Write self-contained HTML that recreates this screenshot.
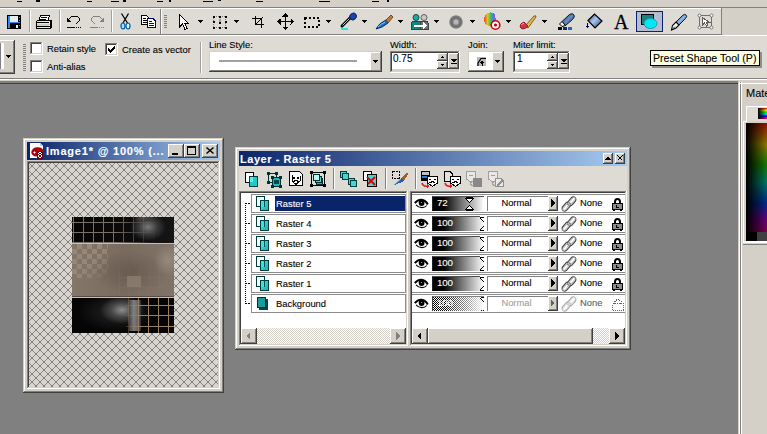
<!DOCTYPE html>
<html><head><meta charset="utf-8"><style>
*{margin:0;padding:0;box-sizing:border-box}
html,body{width:767px;height:434px;overflow:hidden;background:#D4D0C8;font-family:"Liberation Sans",sans-serif;font-size:11px;color:#000;position:relative}
.a{position:absolute}
.t{white-space:nowrap;line-height:1;-webkit-text-stroke:0.1px currentColor}
svg{overflow:visible}
</style></head><body>
<svg width="0" height="0" style="position:absolute"><defs><linearGradient id="tg" x1="0" y1="0" x2="1" y2="1"><stop offset="0" stop-color="#50E8E8"/><stop offset="1" stop-color="#18A8A8"/></linearGradient><linearGradient id="rb" x1="0" y1="0" x2="1" y2="0"><stop offset="0" stop-color="#F04020"/><stop offset="0.3" stop-color="#F0C020"/><stop offset="0.5" stop-color="#40D040"/><stop offset="0.75" stop-color="#4080F0"/><stop offset="1" stop-color="#C040E0"/></linearGradient></defs></svg>
<div class="a" style="left:17px;top:1px;width:5px;height:1px;background:#000;"></div>
<div class="a" style="left:36px;top:0px;width:4px;height:2px;background:#000;"></div>
<div class="a" style="left:87px;top:1px;width:5px;height:1px;background:#000;"></div>
<div class="a" style="left:111px;top:1px;width:8px;height:1px;background:#000;"></div>
<div class="a" style="left:123px;top:0px;width:3px;height:2px;background:#000;"></div>
<div class="a" style="left:157px;top:1px;width:6px;height:1px;background:#000;"></div>
<div class="a" style="left:169px;top:0px;width:2px;height:2px;background:#000;"></div>
<div class="a" style="left:203px;top:1px;width:10px;height:1px;background:#000;"></div>
<div class="a" style="left:218px;top:0px;width:3px;height:1px;background:#000;"></div>
<div class="a" style="left:256px;top:1px;width:7px;height:1px;background:#000;"></div>
<div class="a" style="left:319px;top:1px;width:11px;height:1px;background:#000;"></div>
<div class="a" style="left:372px;top:1px;width:7px;height:1px;background:#000;"></div>
<div class="a" style="left:387px;top:0px;width:2px;height:2px;background:#000;"></div>
<div class="a" style="left:0px;top:8px;width:721px;height:26px;background:#DEDBD5;"></div>
<div class="a" style="left:0px;top:36px;width:767px;height:42px;background:#DEDBD5;"></div>
<div class="a" style="left:0px;top:7px;width:767px;height:1px;background:#808080;"></div>
<div class="a" style="left:0px;top:8px;width:721px;height:1px;background:#FFFFFF;"></div>
<div class="a" style="left:0px;top:34px;width:722px;height:1px;background:#808080;"></div>
<div class="a" style="left:0px;top:35px;width:767px;height:1px;background:#FFFFFF;"></div>
<div class="a" style="left:160px;top:9px;width:1px;height:25px;background:#808080;"></div>
<div class="a" style="left:161px;top:9px;width:1px;height:25px;background:#FFFFFF;"></div>
<div class="a" style="left:721px;top:8px;width:1px;height:27px;background:#808080;"></div>
<div class="a" style="left:29px;top:10px;width:1px;height:22px;background:#A0A0A0;"></div>
<div class="a" style="left:30px;top:10px;width:1px;height:22px;background:#FFFFFF;"></div>
<div class="a" style="left:59px;top:10px;width:1px;height:22px;background:#A0A0A0;"></div>
<div class="a" style="left:60px;top:10px;width:1px;height:22px;background:#FFFFFF;"></div>
<div class="a" style="left:111px;top:10px;width:1px;height:22px;background:#A0A0A0;"></div>
<div class="a" style="left:112px;top:10px;width:1px;height:22px;background:#FFFFFF;"></div>
<div class="a" style="left:164px;top:15px;width:3px;height:1px;background:#808080;"></div>
<div class="a" style="left:164px;top:17px;width:3px;height:1px;background:#808080;"></div>
<div class="a" style="left:164px;top:19px;width:3px;height:1px;background:#808080;"></div>
<div class="a" style="left:164px;top:21px;width:3px;height:1px;background:#808080;"></div>
<div class="a" style="left:164px;top:23px;width:3px;height:1px;background:#808080;"></div>
<div class="a" style="left:164px;top:25px;width:3px;height:1px;background:#808080;"></div>
<div class="a" style="left:164px;top:27px;width:3px;height:1px;background:#808080;"></div>
<div class="a" style="left:0px;top:78px;width:767px;height:1px;background:#808080;"></div>
<div class="a" style="left:0px;top:79px;width:767px;height:1px;background:#FFFFFF;"></div>
<div class="a" style="left:0px;top:81px;width:738px;height:353px;background:#808080;"></div>
<div class="a" style="left:0px;top:83px;width:738px;height:1px;background:#404040;"></div>
<div class="a" style="left:738px;top:81px;width:29px;height:353px;background:#D4D0C8;"></div>
<div class="a" style="left:738px;top:81px;width:1px;height:353px;background:#D4D0C8;"></div>
<div class="a" style="left:739px;top:82px;width:1px;height:352px;background:#FFFFFF;"></div>
<div class="a" style="left:740px;top:82px;width:1px;height:352px;background:#808080;"></div>
<div class="a" style="left:741px;top:82px;width:1px;height:352px;background:#FFFFFF;"></div>
<div class="a" style="left:23px;top:138px;width:201px;height:255px;background:#D4D0C8;"></div>
<div class="a" style="left:23px;top:138px;width:201px;height:1px;background:#D4D0C8;"></div>
<div class="a" style="left:23px;top:138px;width:1px;height:255px;background:#D4D0C8;"></div>
<div class="a" style="left:24px;top:139px;width:199px;height:1px;background:#FFFFFF;"></div>
<div class="a" style="left:24px;top:139px;width:1px;height:253px;background:#FFFFFF;"></div>
<div class="a" style="left:23px;top:392px;width:201px;height:1px;background:#404040;"></div>
<div class="a" style="left:223px;top:138px;width:1px;height:255px;background:#404040;"></div>
<div class="a" style="left:24px;top:391px;width:199px;height:1px;background:#808080;"></div>
<div class="a" style="left:222px;top:139px;width:1px;height:253px;background:#808080;"></div>
<div class="a" style="left:27px;top:142px;width:193px;height:18px;background:linear-gradient(to right,#0A246A,#A6CAF0)"></div>
<div class="a t" style="left:46px;top:146px;font-size:11px;color:#fff;font-weight:bold;letter-spacing:0.8px">Image1* @ 100% (...</div>
<svg class="a" style="left:29px;top:143px" width="16" height="16" viewBox="0 0 16 16" shape-rendering="crispEdges"><path d="M1 0 H11 L14 3 V15 H1 Z" fill="#fff"/><path d="M11 0 V3 H14 Z" fill="#C0C0E8"/><path d="M2.5 8 Q4 4 8.5 4.2 Q12 3.8 14 6.5 V13 L9 13.5 Q5.5 14 3.5 12 Q1.5 10.5 2.5 8 Z" fill="#A80010" shape-rendering="auto"/><rect x="8" y="8" width="6" height="8" rx="2.5" fill="#6A0008"/><rect x="5" y="9" width="1" height="1" fill="#fff"/><rect x="4" y="9" width="1" height="1" fill="#F08080"/><rect x="6" y="9" width="1" height="1" fill="#F08080"/><rect x="5" y="8" width="1" height="1" fill="#F08080"/><rect x="5" y="10" width="1" height="1" fill="#F08080"/><rect x="10" y="9" width="1" height="1" fill="#fff"/><rect x="11" y="9" width="1" height="1" fill="#fff"/><rect x="9" y="10" width="1" height="1" fill="#fff"/><rect x="12" y="10" width="1" height="1" fill="#fff"/><rect x="10" y="11" width="1" height="1" fill="#fff"/><rect x="11" y="11" width="1" height="1" fill="#fff"/><rect x="9" y="12" width="1" height="1" fill="#fff"/><rect x="12" y="12" width="1" height="1" fill="#fff"/><rect x="9" y="13" width="1" height="1" fill="#fff"/><rect x="12" y="13" width="1" height="1" fill="#fff"/><rect x="10" y="14" width="1" height="1" fill="#fff"/><rect x="11" y="14" width="1" height="1" fill="#fff"/></svg>
<div class="a" style="left:168px;top:144px;width:16px;height:14px;background:#D4D0C8;"></div>
<div class="a" style="left:168px;top:144px;width:16px;height:1px;background:#FFFFFF;"></div>
<div class="a" style="left:168px;top:144px;width:1px;height:14px;background:#FFFFFF;"></div>
<div class="a" style="left:168px;top:157px;width:16px;height:1px;background:#404040;"></div>
<div class="a" style="left:183px;top:144px;width:1px;height:14px;background:#404040;"></div>
<div class="a" style="left:169px;top:156px;width:14px;height:1px;background:#808080;"></div>
<div class="a" style="left:182px;top:145px;width:1px;height:12px;background:#808080;"></div>
<div class="a" style="left:172px;top:153px;width:6px;height:2px;background:#000;"></div>
<div class="a" style="left:184px;top:144px;width:16px;height:14px;background:#D4D0C8;"></div>
<div class="a" style="left:184px;top:144px;width:16px;height:1px;background:#FFFFFF;"></div>
<div class="a" style="left:184px;top:144px;width:1px;height:14px;background:#FFFFFF;"></div>
<div class="a" style="left:184px;top:157px;width:16px;height:1px;background:#404040;"></div>
<div class="a" style="left:199px;top:144px;width:1px;height:14px;background:#404040;"></div>
<div class="a" style="left:185px;top:156px;width:14px;height:1px;background:#808080;"></div>
<div class="a" style="left:198px;top:145px;width:1px;height:12px;background:#808080;"></div>
<div class="a" style="left:187px;top:146px;width:9px;height:9px;background:transparent;border:1px solid #000;border-top-width:2px"></div>
<div class="a" style="left:202px;top:144px;width:16px;height:14px;background:#D4D0C8;"></div>
<div class="a" style="left:202px;top:144px;width:16px;height:1px;background:#FFFFFF;"></div>
<div class="a" style="left:202px;top:144px;width:1px;height:14px;background:#FFFFFF;"></div>
<div class="a" style="left:202px;top:157px;width:16px;height:1px;background:#404040;"></div>
<div class="a" style="left:217px;top:144px;width:1px;height:14px;background:#404040;"></div>
<div class="a" style="left:203px;top:156px;width:14px;height:1px;background:#808080;"></div>
<div class="a" style="left:216px;top:145px;width:1px;height:12px;background:#808080;"></div>
<svg class="a" style="left:206px;top:147px" width="8" height="7" viewBox="0 0 8 7" shape-rendering="crispEdges"><path d="M0.5 0.5 L7.5 6.5 M7.5 0.5 L0.5 6.5" stroke="#000" stroke-width="1.5" fill="none" shape-rendering="auto"/></svg>
<div class="a" style="left:27px;top:161px;width:193px;height:1px;background:#808080;"></div>
<div class="a" style="left:27px;top:161px;width:1px;height:228px;background:#808080;"></div>
<div class="a" style="left:28px;top:162px;width:191px;height:1px;background:#404040;"></div>
<div class="a" style="left:28px;top:162px;width:1px;height:226px;background:#404040;"></div>
<div class="a" style="left:27px;top:388px;width:193px;height:1px;background:#FFFFFF;"></div>
<div class="a" style="left:219px;top:161px;width:1px;height:228px;background:#FFFFFF;"></div>
<div class="a" style="left:28px;top:387px;width:191px;height:1px;background:#D4D0C8;"></div>
<div class="a" style="left:218px;top:162px;width:1px;height:226px;background:#D4D0C8;"></div>
<svg class="a" style="left:29px;top:163px" width="189" height="224" shape-rendering="crispEdges"><defs><pattern id="dg" x="3" y="3" width="8" height="8" patternUnits="userSpaceOnUse"><rect width="8" height="8" fill="#D8D5D0"/><rect x="0" y="0" width="1" height="1" fill="#83807C"/><rect x="7" y="0" width="1" height="1" fill="#83807C"/><rect x="1" y="1" width="1" height="1" fill="#8A8783"/><rect x="6" y="1" width="1" height="1" fill="#8A8783"/><rect x="2" y="2" width="1" height="1" fill="#8A8783"/><rect x="5" y="2" width="1" height="1" fill="#8A8783"/><rect x="3" y="3" width="1" height="1" fill="#83807C"/><rect x="4" y="3" width="1" height="1" fill="#83807C"/><rect x="4" y="4" width="1" height="1" fill="#83807C"/><rect x="3" y="4" width="1" height="1" fill="#83807C"/><rect x="5" y="5" width="1" height="1" fill="#8A8783"/><rect x="2" y="5" width="1" height="1" fill="#8A8783"/><rect x="6" y="6" width="1" height="1" fill="#8A8783"/><rect x="1" y="6" width="1" height="1" fill="#8A8783"/><rect x="7" y="7" width="1" height="1" fill="#83807C"/><rect x="0" y="7" width="1" height="1" fill="#83807C"/></pattern></defs><rect width="189" height="224" fill="url(#dg)"/></svg>
<div class="a" style="left:72px;top:217px;width:102px;height:116px;background:#000;overflow:hidden"><div class="a" style="left:0;top:0;width:102px;height:26px;background:radial-gradient(ellipse 18px 14px at 76px 10px,#7a7a7a,#3c3c3c 50%,rgba(0,0,0,0) 100%),radial-gradient(ellipse 10px 6px at 72px 1px,#6a6a6a,rgba(0,0,0,0) 100%),linear-gradient(to right,#060606,#0c0c0c 60%,#151515 100%)"></div><div class="a" style="left:0;top:0;width:85px;height:26px;background:repeating-linear-gradient(to right,transparent 0 1px,#7A7068 1px 2px,transparent 2px 10px),repeating-linear-gradient(to bottom,transparent 0 5px,#7A7068 5px 6px,transparent 6px 10px);-webkit-mask-image:linear-gradient(to right,#000 50%,transparent 100%)"></div><div class="a" style="left:0;top:26px;width:102px;height:1px;background:#C8BEB4"></div><div class="a" style="left:0;top:27px;width:102px;height:53px;background:radial-gradient(ellipse 14px 16px at 96px 16px,#978A7D,rgba(0,0,0,0)),radial-gradient(ellipse 38px 22px at 58px 28px,#695B50,rgba(0,0,0,0)),linear-gradient(to right,#85766A,#7A6B5F 50%,#807266 100%)"></div><div class="a" style="left:0;top:27px;width:36px;height:34px;background-image:linear-gradient(45deg,#958779 25%,transparent 25%,transparent 75%,#958779 75%),linear-gradient(45deg,#958779 25%,transparent 25%,transparent 75%,#958779 75%);background-size:10px 10px;background-position:0 0,5px 5px;-webkit-mask-image:linear-gradient(to bottom right,#000 50%,transparent 100%)"></div><div class="a" style="left:55px;top:59px;width:14px;height:11px;background:#8E8175;opacity:.7"></div><div class="a" style="left:45px;top:52px;width:57px;height:27px;background:repeating-linear-gradient(to right,transparent 0 2px,#9A7A5A 2px 3px,transparent 3px 10px),repeating-linear-gradient(to bottom,transparent 0 8px,#9A7A5A 8px 9px,transparent 9px 10px);opacity:.2"></div><div class="a" style="left:0;top:79px;width:102px;height:1px;background:#5a4c42"></div><div class="a" style="left:0;top:80px;width:102px;height:1px;background:#C8BEB4"></div><div class="a" style="left:0;top:81px;width:102px;height:35px;background:radial-gradient(ellipse 22px 14px at 50px 12px,#8e8e8e,#454545 50%,rgba(0,0,0,0) 100%),radial-gradient(ellipse 40px 20px at 45px 14px,#252525,rgba(0,0,0,0) 100%),linear-gradient(#050505,#050505)"></div><div class="a" style="left:57px;top:83px;width:12px;height:31px;background:linear-gradient(to right,#484848,#8e8e8e 40%,#6a6a6a 80%,#303030);opacity:.85"></div><div class="a" style="left:54px;top:81px;width:48px;height:35px;background:repeating-linear-gradient(to right,transparent 0 2px,#9C7E60 2px 3px,transparent 3px 10px),repeating-linear-gradient(to bottom,transparent 0 7px,#9C7E60 7px 8px,transparent 8px 10.5px);-webkit-mask-image:linear-gradient(to right,rgba(0,0,0,.3) 0%,#000 30%)"></div></div>
<div class="a" style="left:235px;top:147px;width:396px;height:203px;background:#D4D0C8;"></div>
<div class="a" style="left:235px;top:147px;width:396px;height:1px;background:#D4D0C8;"></div>
<div class="a" style="left:235px;top:147px;width:1px;height:203px;background:#D4D0C8;"></div>
<div class="a" style="left:236px;top:148px;width:394px;height:1px;background:#FFFFFF;"></div>
<div class="a" style="left:236px;top:148px;width:1px;height:201px;background:#FFFFFF;"></div>
<div class="a" style="left:235px;top:349px;width:396px;height:1px;background:#404040;"></div>
<div class="a" style="left:630px;top:147px;width:1px;height:203px;background:#404040;"></div>
<div class="a" style="left:236px;top:348px;width:394px;height:1px;background:#808080;"></div>
<div class="a" style="left:629px;top:148px;width:1px;height:201px;background:#808080;"></div>
<div class="a" style="left:239px;top:151px;width:388px;height:15px;background:linear-gradient(to right,#0A246A,#A6CAF0)"></div>
<div class="a t" style="left:240px;top:154px;font-size:11px;color:#fff;font-weight:bold;letter-spacing:0.55px">Layer - Raster 5</div>
<div class="a" style="left:239px;top:166px;width:388px;height:25px;background:#DEDBD5;"></div>
<div class="a" style="left:603px;top:153px;width:10px;height:11px;background:#D4D0C8;"></div>
<div class="a" style="left:603px;top:153px;width:10px;height:1px;background:#FFFFFF;"></div>
<div class="a" style="left:603px;top:153px;width:1px;height:11px;background:#FFFFFF;"></div>
<div class="a" style="left:603px;top:163px;width:10px;height:1px;background:#404040;"></div>
<div class="a" style="left:612px;top:153px;width:1px;height:11px;background:#404040;"></div>
<div class="a" style="left:604px;top:162px;width:8px;height:1px;background:#808080;"></div>
<div class="a" style="left:611px;top:154px;width:1px;height:9px;background:#808080;"></div>
<div class="a" style="left:607px;top:157px;width:2px;height:1px;background:#000;"></div>
<div class="a" style="left:606px;top:158px;width:4px;height:1px;background:#000;"></div>
<div class="a" style="left:605px;top:159px;width:6px;height:1px;background:#000;"></div>
<div class="a" style="left:615px;top:153px;width:10px;height:11px;background:#D4D0C8;"></div>
<div class="a" style="left:615px;top:153px;width:10px;height:1px;background:#FFFFFF;"></div>
<div class="a" style="left:615px;top:153px;width:1px;height:11px;background:#FFFFFF;"></div>
<div class="a" style="left:615px;top:163px;width:10px;height:1px;background:#404040;"></div>
<div class="a" style="left:624px;top:153px;width:1px;height:11px;background:#404040;"></div>
<div class="a" style="left:616px;top:162px;width:8px;height:1px;background:#808080;"></div>
<div class="a" style="left:623px;top:154px;width:1px;height:9px;background:#808080;"></div>
<div class="a" style="left:617px;top:155px;width:1px;height:1px;background:#000;"></div>
<div class="a" style="left:622px;top:155px;width:1px;height:1px;background:#000;"></div>
<div class="a" style="left:618px;top:156px;width:1px;height:1px;background:#000;"></div>
<div class="a" style="left:621px;top:156px;width:1px;height:1px;background:#000;"></div>
<div class="a" style="left:619px;top:157px;width:1px;height:1px;background:#000;"></div>
<div class="a" style="left:620px;top:157px;width:1px;height:1px;background:#000;"></div>
<div class="a" style="left:620px;top:158px;width:1px;height:1px;background:#000;"></div>
<div class="a" style="left:619px;top:158px;width:1px;height:1px;background:#000;"></div>
<div class="a" style="left:621px;top:159px;width:1px;height:1px;background:#000;"></div>
<div class="a" style="left:618px;top:159px;width:1px;height:1px;background:#000;"></div>
<svg class="a" style="left:245px;top:172px" width="13" height="15" viewBox="0 0 13 15" shape-rendering="crispEdges"><rect x="0.5" y="0.5" width="8" height="10" fill="#fff" stroke="#000" stroke-width="1"/><rect x="4.5" y="4.5" width="8" height="10" fill="#20C8C8" stroke="#003C3C" stroke-width="1"/><rect x="5" y="5" width="3" height="5" fill="#60F0F0"/></svg>
<svg class="a" style="left:266px;top:172px" width="16" height="16" viewBox="0 0 16 16" shape-rendering="crispEdges"><rect x="2.5" y="1.5" width="8" height="9" fill="none" stroke="#003030"/><rect x="6.5" y="5.5" width="8" height="9" fill="#20B8B8" stroke="#003030"/><circle cx="10.5" cy="10" r="2.5" fill="#004848"/><rect x="1" y="0" width="3" height="3" fill="#003030"/><rect x="9" y="0" width="3" height="3" fill="#003030"/><rect x="1" y="9" width="3" height="3" fill="#003030"/><rect x="5" y="4" width="3" height="3" fill="#003030"/><rect x="13" y="4" width="3" height="3" fill="#003030"/><rect x="5" y="13" width="3" height="3" fill="#003030"/><rect x="13" y="13" width="3" height="3" fill="#003030"/></svg>
<svg class="a" style="left:289px;top:171px" width="14" height="15" viewBox="0 0 14 15" shape-rendering="crispEdges"><path d="M0.5 0.5 H10.5 L13.5 3.5 V14.5 H0.5 Z" fill="#fff" stroke="#000"/><path d="M3 3.5 V10 L7 13.5 L11 10 V5" fill="none" stroke="#000"/><rect x="4" y="6" width="2" height="2" fill="#000"/><rect x="8" y="6" width="2" height="2" fill="#000"/><path d="M4 11 Q7 8 10 11" stroke="#000" stroke-width="1.5" fill="none"/></svg>
<svg class="a" style="left:310px;top:171px" width="16" height="16" viewBox="0 0 16 16" shape-rendering="crispEdges"><rect x="1.5" y="1.5" width="13" height="13" fill="none" stroke="#000"/><rect x="0" y="0" width="3" height="3" fill="#000"/><rect x="13" y="0" width="3" height="3" fill="#000"/><rect x="0" y="13" width="3" height="3" fill="#000"/><rect x="13" y="13" width="3" height="3" fill="#000"/><rect x="6.5" y="7.5" width="6" height="6" fill="#40A8A0" stroke="#003030" stroke-width="1"/><rect x="5.5" y="5.5" width="6" height="6" fill="#60D0C8" stroke="#003030" stroke-width="1"/><rect x="3.5" y="3.5" width="6" height="6" fill="#B0F8F8" stroke="#003030" stroke-width="1"/></svg>
<div class="a" style="left:333px;top:168px;width:1px;height:21px;background:#808080;"></div>
<div class="a" style="left:334px;top:168px;width:1px;height:21px;background:#FFFFFF;"></div>
<svg class="a" style="left:340px;top:171px" width="17" height="16" viewBox="0 0 17 16" shape-rendering="crispEdges"><rect x="0.5" y="0.5" width="6" height="6" fill="#40D8D0" stroke="#003C3C" stroke-width="1"/><rect x="2.5" y="2.5" width="6" height="6" fill="#40D8D0" stroke="#003C3C" stroke-width="1"/><rect x="8.5" y="7.5" width="6" height="6" fill="#40D8D0" stroke="#003C3C" stroke-width="1"/><rect x="10.5" y="9.5" width="6" height="6" fill="#40D8D0" stroke="#003C3C" stroke-width="1"/></svg>
<svg class="a" style="left:363px;top:171px" width="14" height="16" viewBox="0 0 14 16" shape-rendering="crispEdges"><rect x="0.5" y="0.5" width="8" height="9" fill="#fff" stroke="#000" stroke-width="1"/><rect x="4.5" y="3.5" width="9" height="12" fill="#40D8D8" stroke="#000" stroke-width="1"/><path d="M4 6 L12 14 M12 6 L5 13" stroke="#E00000" stroke-width="2" fill="none" shape-rendering="auto"/></svg>
<div class="a" style="left:385px;top:168px;width:1px;height:21px;background:#808080;"></div>
<div class="a" style="left:386px;top:168px;width:1px;height:21px;background:#FFFFFF;"></div>
<svg class="a" style="left:392px;top:171px" width="17" height="16" viewBox="0 0 17 16" shape-rendering="crispEdges"><rect x="0.5" y="0.5" width="7" height="7" fill="none" stroke="#000" stroke-dasharray="2 1"/><path d="M1 15 L9 7 L12 10 Z" fill="#2060B0"/><path d="M9 7 L15 1 L16 3 L12 10 Z" fill="#A06020"/><path d="M2 14 L9 8" stroke="#60A0E0" stroke-width="1" shape-rendering="auto"/></svg>
<div class="a" style="left:415px;top:168px;width:1px;height:21px;background:#808080;"></div>
<div class="a" style="left:416px;top:168px;width:1px;height:21px;background:#FFFFFF;"></div>
<svg class="a" style="left:421px;top:171px" width="18" height="18" viewBox="0 0 18 18" shape-rendering="crispEdges"><rect x="0" y="0" width="9" height="10" fill="#000"/><rect x="1" y="1" width="7" height="3" fill="#C0C0C0"/><rect x="1" y="5" width="7" height="2" fill="#2080E0"/><path d="M6.5 5.5 H16.5 V12 L11.5 15.5 L6.5 12 Z" fill="#fff" stroke="#000"/><rect x="8" y="8" width="2" height="1" fill="#000"/><rect x="13" y="8" width="2" height="1" fill="#000"/><path d="M9 12 Q11.5 9.5 14 12" stroke="#000" stroke-width="1.4" fill="none"/><path d="M1 12 Q2 16 7 15" stroke="#E02020" stroke-width="1.5" fill="none" shape-rendering="auto"/><path d="M6 13 L9 15 L6 17 Z" fill="#E02020"/></svg>
<svg class="a" style="left:444px;top:171px" width="18" height="18" viewBox="0 0 18 18" shape-rendering="crispEdges"><path d="M0.5 0.5 H6 L8.5 3 V10.5 H0.5 Z" fill="#E0E0E0" stroke="#000"/><path d="M6.5 5.5 H16.5 V12 L11.5 15.5 L6.5 12 Z" fill="#fff" stroke="#000"/><rect x="8" y="8" width="2" height="1" fill="#000"/><rect x="13" y="8" width="2" height="1" fill="#000"/><path d="M9 12 Q11.5 9.5 14 12" stroke="#000" stroke-width="1.4" fill="none"/><path d="M1 12 Q2 16 7 15" stroke="#E02020" stroke-width="1.5" fill="none" shape-rendering="auto"/><path d="M6 13 L9 15 L6 17 Z" fill="#E02020"/></svg>
<svg class="a" style="left:466px;top:171px" width="17" height="17" viewBox="0 0 17 17" shape-rendering="crispEdges"><path d="M0.5 0.5 H9.5 V8 L5 11.5 L0.5 8 Z" fill="#E8E8E8" stroke="#A0A0A0"/><path d="M3 5 Q5 3.5 7 5" stroke="#A0A0A0" fill="none"/><rect x="7" y="7" width="9" height="9" fill="#888"/><path d="M4 12 Q5 15 8 15" stroke="#A0A0A0" fill="none"/></svg>
<svg class="a" style="left:488px;top:171px" width="17" height="17" viewBox="0 0 17 17" shape-rendering="crispEdges"><path d="M0.5 0.5 H9.5 V8 L5 11.5 L0.5 8 Z" fill="#E8E8E8" stroke="#A0A0A0"/><path d="M3 5 Q5 3.5 7 5" stroke="#A0A0A0" fill="none"/><path d="M7.5 7.5 H13 L15.5 10 V15.5 H7.5 Z" fill="#E8E8E8" stroke="#909090"/><path d="M9 15 L15 9" stroke="#909090" stroke-width="2"/><path d="M4 12 Q5 15 8 15" stroke="#A0A0A0" fill="none"/></svg>
<div class="a" style="left:239px;top:191px;width:169px;height:155px;background:#FFFFFF;"></div>
<div class="a" style="left:239px;top:191px;width:169px;height:1px;background:#808080;"></div>
<div class="a" style="left:239px;top:191px;width:1px;height:155px;background:#808080;"></div>
<div class="a" style="left:240px;top:192px;width:167px;height:1px;background:#404040;"></div>
<div class="a" style="left:240px;top:192px;width:1px;height:153px;background:#404040;"></div>
<div class="a" style="left:239px;top:345px;width:169px;height:1px;background:#FFFFFF;"></div>
<div class="a" style="left:407px;top:191px;width:1px;height:155px;background:#FFFFFF;"></div>
<div class="a" style="left:240px;top:344px;width:167px;height:1px;background:#D4D0C8;"></div>
<div class="a" style="left:406px;top:192px;width:1px;height:153px;background:#D4D0C8;"></div>
<div class="a" style="left:410px;top:191px;width:217px;height:155px;background:#FFFFFF;"></div>
<div class="a" style="left:410px;top:191px;width:217px;height:1px;background:#808080;"></div>
<div class="a" style="left:410px;top:191px;width:1px;height:155px;background:#808080;"></div>
<div class="a" style="left:411px;top:192px;width:215px;height:1px;background:#404040;"></div>
<div class="a" style="left:411px;top:192px;width:1px;height:153px;background:#404040;"></div>
<div class="a" style="left:410px;top:345px;width:217px;height:1px;background:#FFFFFF;"></div>
<div class="a" style="left:626px;top:191px;width:1px;height:155px;background:#FFFFFF;"></div>
<div class="a" style="left:411px;top:344px;width:215px;height:1px;background:#D4D0C8;"></div>
<div class="a" style="left:625px;top:192px;width:1px;height:153px;background:#D4D0C8;"></div>
<div class="a" style="left:251px;top:194px;width:155px;height:19px;border:1px solid #8C8C8C;border-right-color:#8C8C8C"></div>
<div class="a" style="left:412px;top:194px;width:213px;height:19px;border-top:1px solid #8C8C8C;border-bottom:1px solid #8C8C8C"></div>
<div class="a" style="left:245px;top:203px;width:1px;height:1px;background:#000;"></div>
<div class="a" style="left:246px;top:203px;width:1px;height:1px;background:#000;"></div>
<div class="a" style="left:248px;top:203px;width:1px;height:1px;background:#000;"></div>
<div class="a" style="left:249px;top:203px;width:1px;height:1px;background:#000;"></div>
<svg class="a" style="left:256px;top:196px" width="13" height="15" viewBox="0 0 13 15" shape-rendering="crispEdges"><rect x="0.5" y="0.5" width="8" height="10" fill="#fff" stroke="#003C3C" stroke-width="1"/><rect x="4" y="4" width="9" height="11" fill="url(#tg)"/><rect x="4.5" y="4.5" width="8" height="10" fill="none" stroke="#003C3C"/><rect x="5" y="5" width="3" height="6" fill="#30E8E8"/><rect x="8" y="4" width="1" height="7" fill="#005050"/></svg>
<div class="a" style="left:275px;top:196px;width:130px;height:15px;background:#0A246A;"></div>
<div class="a t" style="left:276px;top:199px;font-size:9.4px;color:#fff;font-weight:normal;">Raster 5</div>
<svg class="a" style="left:414px;top:199px" width="15" height="10" viewBox="0 0 15 10" shape-rendering="crispEdges"><g shape-rendering="auto" fill="none" stroke="#000"><path d="M0.8 4.2 Q3.5 0.6 7.5 0.8 Q11.5 1 13.8 5.5" stroke-width="2"/><path d="M2 5.8 Q4.5 8.6 7.8 8.6 Q11 8.5 12.8 6.5" stroke-width="1.1"/></g><ellipse cx="7.6" cy="3.8" rx="2.9" ry="3.2" fill="#000" shape-rendering="auto"/><rect x="7" y="3" width="1" height="1" fill="#9A9A9A"/></svg>
<div class="a" style="left:432px;top:196px;width:52px;height:15px;background:linear-gradient(to right,#000 0%,#080808 22%,#fff 100%);border-top:1px solid #505050;border-left:1px solid #202020"></div>
<div class="a t" style="left:437px;top:198px;font-size:9.8px;color:#fff;font-weight:normal;letter-spacing:-0.2px">72</div>
<svg class="a" style="left:465px;top:197px" width="9" height="14" viewBox="0 0 9 14" shape-rendering="crispEdges"><rect x="1" y="0" width="1" height="1" fill="#000"/><rect x="2" y="0" width="1" height="1" fill="#000"/><rect x="3" y="0" width="1" height="1" fill="#000"/><rect x="4" y="0" width="1" height="1" fill="#000"/><rect x="5" y="0" width="1" height="1" fill="#000"/><rect x="6" y="0" width="1" height="1" fill="#000"/><rect x="7" y="0" width="1" height="1" fill="#000"/><rect x="0" y="1" width="1" height="1" fill="#000"/><rect x="1" y="1" width="1" height="1" fill="#000"/><rect x="2" y="1" width="1" height="1" fill="#000"/><rect x="3" y="1" width="1" height="1" fill="#000"/><rect x="4" y="1" width="1" height="1" fill="#000"/><rect x="5" y="1" width="1" height="1" fill="#000"/><rect x="6" y="1" width="1" height="1" fill="#000"/><rect x="7" y="1" width="1" height="1" fill="#000"/><rect x="8" y="1" width="1" height="1" fill="#000"/><rect x="1" y="2" width="1" height="1" fill="#000"/><rect x="7" y="2" width="1" height="1" fill="#000"/><rect x="2" y="2" width="1" height="1" fill="#fff"/><rect x="3" y="2" width="1" height="1" fill="#fff"/><rect x="4" y="2" width="1" height="1" fill="#fff"/><rect x="5" y="2" width="1" height="1" fill="#fff"/><rect x="6" y="2" width="1" height="1" fill="#fff"/><rect x="2" y="3" width="1" height="1" fill="#000"/><rect x="6" y="3" width="1" height="1" fill="#000"/><rect x="3" y="3" width="1" height="1" fill="#fff"/><rect x="4" y="3" width="1" height="1" fill="#fff"/><rect x="5" y="3" width="1" height="1" fill="#fff"/><rect x="3" y="4" width="1" height="1" fill="#000"/><rect x="5" y="4" width="1" height="1" fill="#000"/><rect x="4" y="4" width="1" height="1" fill="#fff"/><rect x="4" y="5" width="1" height="1" fill="#000"/><rect x="4" y="8" width="1" height="1" fill="#000"/><rect x="3" y="9" width="1" height="1" fill="#000"/><rect x="5" y="9" width="1" height="1" fill="#000"/><rect x="4" y="9" width="1" height="1" fill="#fff"/><rect x="2" y="10" width="1" height="1" fill="#000"/><rect x="6" y="10" width="1" height="1" fill="#000"/><rect x="3" y="10" width="1" height="1" fill="#fff"/><rect x="4" y="10" width="1" height="1" fill="#fff"/><rect x="5" y="10" width="1" height="1" fill="#fff"/><rect x="1" y="11" width="1" height="1" fill="#000"/><rect x="7" y="11" width="1" height="1" fill="#000"/><rect x="2" y="11" width="1" height="1" fill="#fff"/><rect x="3" y="11" width="1" height="1" fill="#fff"/><rect x="4" y="11" width="1" height="1" fill="#fff"/><rect x="5" y="11" width="1" height="1" fill="#fff"/><rect x="6" y="11" width="1" height="1" fill="#fff"/><rect x="0" y="12" width="1" height="1" fill="#000"/><rect x="1" y="12" width="1" height="1" fill="#000"/><rect x="2" y="12" width="1" height="1" fill="#000"/><rect x="3" y="12" width="1" height="1" fill="#000"/><rect x="4" y="12" width="1" height="1" fill="#000"/><rect x="5" y="12" width="1" height="1" fill="#000"/><rect x="6" y="12" width="1" height="1" fill="#000"/><rect x="7" y="12" width="1" height="1" fill="#000"/><rect x="8" y="12" width="1" height="1" fill="#000"/><rect x="1" y="13" width="1" height="1" fill="#000"/><rect x="2" y="13" width="1" height="1" fill="#000"/><rect x="3" y="13" width="1" height="1" fill="#000"/><rect x="4" y="13" width="1" height="1" fill="#000"/><rect x="5" y="13" width="1" height="1" fill="#000"/><rect x="6" y="13" width="1" height="1" fill="#000"/><rect x="7" y="13" width="1" height="1" fill="#000"/></svg>
<div class="a" style="left:487px;top:196px;width:71px;height:15px;background:#fff;border-top:1px solid #808080;border-left:1px solid #808080"></div>
<div class="a t" style="left:486px;top:198px;width:61px;text-align:center;font-size:9.4px;color:#000">Normal</div>
<div class="a" style="left:548px;top:196px;width:10px;height:15px;background:#D4D0C8;"></div>
<div class="a" style="left:548px;top:196px;width:10px;height:1px;background:#FFFFFF;"></div>
<div class="a" style="left:548px;top:196px;width:1px;height:15px;background:#FFFFFF;"></div>
<div class="a" style="left:548px;top:210px;width:10px;height:1px;background:#404040;"></div>
<div class="a" style="left:557px;top:196px;width:1px;height:15px;background:#404040;"></div>
<div class="a" style="left:549px;top:209px;width:8px;height:1px;background:#808080;"></div>
<div class="a" style="left:556px;top:197px;width:1px;height:13px;background:#808080;"></div>
<svg class="a" style="left:551px;top:199px" width="4" height="8" viewBox="0 0 4 8" shape-rendering="crispEdges"><path d="M0 0 L4 4 L0 8 Z" fill="#000"/></svg>
<svg class="a" style="left:561px;top:197px" width="16" height="15" viewBox="0 0 16 15" shape-rendering="crispEdges"><g shape-rendering="auto" fill="none"><rect x="-5" y="-2.6" width="10" height="5.2" rx="2.6" transform="translate(5.3 9.6) rotate(-50)" stroke="#505050" stroke-width="1.3"/><rect x="-5" y="-2.6" width="10" height="5.2" rx="2.6" transform="translate(10.7 4.4) rotate(-50)" stroke="#505050" stroke-width="1.3"/><rect x="-5" y="-1.2" width="10" height="2.4" rx="1.2" transform="translate(5.3 9.6) rotate(-50)" stroke="#B0B0B0" stroke-width="0.8"/><rect x="-5" y="-1.2" width="10" height="2.4" rx="1.2" transform="translate(10.7 4.4) rotate(-50)" stroke="#B0B0B0" stroke-width="0.8"/></g></svg>
<div class="a t" style="left:580px;top:198px;font-size:9.4px;color:#000;font-weight:normal;">None</div>
<svg class="a" style="left:612px;top:198px" width="11" height="13" viewBox="0 0 11 13" shape-rendering="crispEdges"><path d="M3 6 V3.8 Q3 1 5.5 1 Q8 1 8 3.8 V6" stroke="#000" stroke-width="2" fill="none" shape-rendering="auto"/><rect x="0.5" y="5.5" width="10" height="6" fill="#8C8C8C" stroke="#000"/><rect x="1" y="12" width="2" height="1" fill="#000"/><rect x="8" y="12" width="2" height="1" fill="#000"/><rect x="4" y="7" width="1" height="3" fill="#000"/><rect x="4" y="9" width="3" height="1" fill="#000"/></svg>
<div class="a" style="left:251px;top:214px;width:155px;height:19px;border:1px solid #8C8C8C;border-right-color:#8C8C8C"></div>
<div class="a" style="left:412px;top:214px;width:213px;height:19px;border-top:1px solid #8C8C8C;border-bottom:1px solid #8C8C8C"></div>
<div class="a" style="left:245px;top:223px;width:1px;height:1px;background:#000;"></div>
<div class="a" style="left:246px;top:223px;width:1px;height:1px;background:#000;"></div>
<div class="a" style="left:248px;top:223px;width:1px;height:1px;background:#000;"></div>
<div class="a" style="left:249px;top:223px;width:1px;height:1px;background:#000;"></div>
<svg class="a" style="left:256px;top:216px" width="13" height="15" viewBox="0 0 13 15" shape-rendering="crispEdges"><rect x="0.5" y="0.5" width="8" height="10" fill="#fff" stroke="#003C3C" stroke-width="1"/><rect x="4" y="4" width="9" height="11" fill="url(#tg)"/><rect x="4.5" y="4.5" width="8" height="10" fill="none" stroke="#003C3C"/><rect x="5" y="5" width="3" height="6" fill="#30E8E8"/><rect x="8" y="4" width="1" height="7" fill="#005050"/></svg>
<div class="a t" style="left:276px;top:219px;font-size:9.4px;color:#000;font-weight:normal;">Raster 4</div>
<svg class="a" style="left:414px;top:219px" width="15" height="10" viewBox="0 0 15 10" shape-rendering="crispEdges"><g shape-rendering="auto" fill="none" stroke="#000"><path d="M0.8 4.2 Q3.5 0.6 7.5 0.8 Q11.5 1 13.8 5.5" stroke-width="2"/><path d="M2 5.8 Q4.5 8.6 7.8 8.6 Q11 8.5 12.8 6.5" stroke-width="1.1"/></g><ellipse cx="7.6" cy="3.8" rx="2.9" ry="3.2" fill="#000" shape-rendering="auto"/><rect x="7" y="3" width="1" height="1" fill="#9A9A9A"/></svg>
<div class="a" style="left:432px;top:216px;width:52px;height:15px;background:linear-gradient(to right,#000 0%,#080808 22%,#fff 100%);border-top:1px solid #505050;border-left:1px solid #202020"></div>
<div class="a t" style="left:437px;top:218px;font-size:9.8px;color:#fff;font-weight:normal;letter-spacing:-0.2px">100</div>
<div class="a" style="left:480px;top:216px;width:4px;height:15px;background:transparent;"></div>
<div class="a" style="left:480px;top:216px;width:4px;height:15px;background:#fff;clip-path:polygon(0 0,100% 0,100% 100%,0 100%,0 93%,100% 60%,100% 40%,0 7%)"></div>
<svg class="a" style="left:480px;top:216px" width="4" height="15" viewBox="0 0 4 15" shape-rendering="crispEdges"><rect x="0" y="1" width="1" height="1" fill="#000"/><rect x="1" y="1" width="1" height="1" fill="#000"/><rect x="2" y="1" width="1" height="1" fill="#000"/><rect x="3" y="1" width="1" height="1" fill="#000"/><rect x="0" y="2" width="1" height="1" fill="#000"/><rect x="1" y="3" width="1" height="1" fill="#000"/><rect x="2" y="4" width="1" height="1" fill="#000"/><rect x="3" y="5" width="1" height="1" fill="#000"/><rect x="3" y="10" width="1" height="1" fill="#000"/><rect x="2" y="11" width="1" height="1" fill="#000"/><rect x="1" y="12" width="1" height="1" fill="#000"/><rect x="0" y="13" width="1" height="1" fill="#000"/><rect x="0" y="14" width="1" height="1" fill="#000"/><rect x="1" y="14" width="1" height="1" fill="#000"/><rect x="2" y="14" width="1" height="1" fill="#000"/><rect x="3" y="14" width="1" height="1" fill="#000"/></svg>
<div class="a" style="left:487px;top:216px;width:71px;height:15px;background:#fff;border-top:1px solid #808080;border-left:1px solid #808080"></div>
<div class="a t" style="left:486px;top:218px;width:61px;text-align:center;font-size:9.4px;color:#000">Normal</div>
<div class="a" style="left:548px;top:216px;width:10px;height:15px;background:#D4D0C8;"></div>
<div class="a" style="left:548px;top:216px;width:10px;height:1px;background:#FFFFFF;"></div>
<div class="a" style="left:548px;top:216px;width:1px;height:15px;background:#FFFFFF;"></div>
<div class="a" style="left:548px;top:230px;width:10px;height:1px;background:#404040;"></div>
<div class="a" style="left:557px;top:216px;width:1px;height:15px;background:#404040;"></div>
<div class="a" style="left:549px;top:229px;width:8px;height:1px;background:#808080;"></div>
<div class="a" style="left:556px;top:217px;width:1px;height:13px;background:#808080;"></div>
<svg class="a" style="left:551px;top:219px" width="4" height="8" viewBox="0 0 4 8" shape-rendering="crispEdges"><path d="M0 0 L4 4 L0 8 Z" fill="#000"/></svg>
<svg class="a" style="left:561px;top:217px" width="16" height="15" viewBox="0 0 16 15" shape-rendering="crispEdges"><g shape-rendering="auto" fill="none"><rect x="-5" y="-2.6" width="10" height="5.2" rx="2.6" transform="translate(5.3 9.6) rotate(-50)" stroke="#505050" stroke-width="1.3"/><rect x="-5" y="-2.6" width="10" height="5.2" rx="2.6" transform="translate(10.7 4.4) rotate(-50)" stroke="#505050" stroke-width="1.3"/><rect x="-5" y="-1.2" width="10" height="2.4" rx="1.2" transform="translate(5.3 9.6) rotate(-50)" stroke="#B0B0B0" stroke-width="0.8"/><rect x="-5" y="-1.2" width="10" height="2.4" rx="1.2" transform="translate(10.7 4.4) rotate(-50)" stroke="#B0B0B0" stroke-width="0.8"/></g></svg>
<div class="a t" style="left:580px;top:218px;font-size:9.4px;color:#000;font-weight:normal;">None</div>
<svg class="a" style="left:612px;top:218px" width="11" height="13" viewBox="0 0 11 13" shape-rendering="crispEdges"><path d="M3 6 V3.8 Q3 1 5.5 1 Q8 1 8 3.8 V6" stroke="#000" stroke-width="2" fill="none" shape-rendering="auto"/><rect x="0.5" y="5.5" width="10" height="6" fill="#8C8C8C" stroke="#000"/><rect x="1" y="12" width="2" height="1" fill="#000"/><rect x="8" y="12" width="2" height="1" fill="#000"/><rect x="4" y="7" width="1" height="3" fill="#000"/><rect x="4" y="9" width="3" height="1" fill="#000"/></svg>
<div class="a" style="left:251px;top:234px;width:155px;height:19px;border:1px solid #8C8C8C;border-right-color:#8C8C8C"></div>
<div class="a" style="left:412px;top:234px;width:213px;height:19px;border-top:1px solid #8C8C8C;border-bottom:1px solid #8C8C8C"></div>
<div class="a" style="left:245px;top:243px;width:1px;height:1px;background:#000;"></div>
<div class="a" style="left:246px;top:243px;width:1px;height:1px;background:#000;"></div>
<div class="a" style="left:248px;top:243px;width:1px;height:1px;background:#000;"></div>
<div class="a" style="left:249px;top:243px;width:1px;height:1px;background:#000;"></div>
<svg class="a" style="left:256px;top:236px" width="13" height="15" viewBox="0 0 13 15" shape-rendering="crispEdges"><rect x="0.5" y="0.5" width="8" height="10" fill="#fff" stroke="#003C3C" stroke-width="1"/><rect x="4" y="4" width="9" height="11" fill="url(#tg)"/><rect x="4.5" y="4.5" width="8" height="10" fill="none" stroke="#003C3C"/><rect x="5" y="5" width="3" height="6" fill="#30E8E8"/><rect x="8" y="4" width="1" height="7" fill="#005050"/></svg>
<div class="a t" style="left:276px;top:239px;font-size:9.4px;color:#000;font-weight:normal;">Raster 3</div>
<svg class="a" style="left:414px;top:239px" width="15" height="10" viewBox="0 0 15 10" shape-rendering="crispEdges"><g shape-rendering="auto" fill="none" stroke="#000"><path d="M0.8 4.2 Q3.5 0.6 7.5 0.8 Q11.5 1 13.8 5.5" stroke-width="2"/><path d="M2 5.8 Q4.5 8.6 7.8 8.6 Q11 8.5 12.8 6.5" stroke-width="1.1"/></g><ellipse cx="7.6" cy="3.8" rx="2.9" ry="3.2" fill="#000" shape-rendering="auto"/><rect x="7" y="3" width="1" height="1" fill="#9A9A9A"/></svg>
<div class="a" style="left:432px;top:236px;width:52px;height:15px;background:linear-gradient(to right,#000 0%,#080808 22%,#fff 100%);border-top:1px solid #505050;border-left:1px solid #202020"></div>
<div class="a t" style="left:437px;top:238px;font-size:9.8px;color:#fff;font-weight:normal;letter-spacing:-0.2px">100</div>
<div class="a" style="left:480px;top:236px;width:4px;height:15px;background:transparent;"></div>
<div class="a" style="left:480px;top:236px;width:4px;height:15px;background:#fff;clip-path:polygon(0 0,100% 0,100% 100%,0 100%,0 93%,100% 60%,100% 40%,0 7%)"></div>
<svg class="a" style="left:480px;top:236px" width="4" height="15" viewBox="0 0 4 15" shape-rendering="crispEdges"><rect x="0" y="1" width="1" height="1" fill="#000"/><rect x="1" y="1" width="1" height="1" fill="#000"/><rect x="2" y="1" width="1" height="1" fill="#000"/><rect x="3" y="1" width="1" height="1" fill="#000"/><rect x="0" y="2" width="1" height="1" fill="#000"/><rect x="1" y="3" width="1" height="1" fill="#000"/><rect x="2" y="4" width="1" height="1" fill="#000"/><rect x="3" y="5" width="1" height="1" fill="#000"/><rect x="3" y="10" width="1" height="1" fill="#000"/><rect x="2" y="11" width="1" height="1" fill="#000"/><rect x="1" y="12" width="1" height="1" fill="#000"/><rect x="0" y="13" width="1" height="1" fill="#000"/><rect x="0" y="14" width="1" height="1" fill="#000"/><rect x="1" y="14" width="1" height="1" fill="#000"/><rect x="2" y="14" width="1" height="1" fill="#000"/><rect x="3" y="14" width="1" height="1" fill="#000"/></svg>
<div class="a" style="left:487px;top:236px;width:71px;height:15px;background:#fff;border-top:1px solid #808080;border-left:1px solid #808080"></div>
<div class="a t" style="left:486px;top:238px;width:61px;text-align:center;font-size:9.4px;color:#000">Normal</div>
<div class="a" style="left:548px;top:236px;width:10px;height:15px;background:#D4D0C8;"></div>
<div class="a" style="left:548px;top:236px;width:10px;height:1px;background:#FFFFFF;"></div>
<div class="a" style="left:548px;top:236px;width:1px;height:15px;background:#FFFFFF;"></div>
<div class="a" style="left:548px;top:250px;width:10px;height:1px;background:#404040;"></div>
<div class="a" style="left:557px;top:236px;width:1px;height:15px;background:#404040;"></div>
<div class="a" style="left:549px;top:249px;width:8px;height:1px;background:#808080;"></div>
<div class="a" style="left:556px;top:237px;width:1px;height:13px;background:#808080;"></div>
<svg class="a" style="left:551px;top:239px" width="4" height="8" viewBox="0 0 4 8" shape-rendering="crispEdges"><path d="M0 0 L4 4 L0 8 Z" fill="#000"/></svg>
<svg class="a" style="left:561px;top:237px" width="16" height="15" viewBox="0 0 16 15" shape-rendering="crispEdges"><g shape-rendering="auto" fill="none"><rect x="-5" y="-2.6" width="10" height="5.2" rx="2.6" transform="translate(5.3 9.6) rotate(-50)" stroke="#505050" stroke-width="1.3"/><rect x="-5" y="-2.6" width="10" height="5.2" rx="2.6" transform="translate(10.7 4.4) rotate(-50)" stroke="#505050" stroke-width="1.3"/><rect x="-5" y="-1.2" width="10" height="2.4" rx="1.2" transform="translate(5.3 9.6) rotate(-50)" stroke="#B0B0B0" stroke-width="0.8"/><rect x="-5" y="-1.2" width="10" height="2.4" rx="1.2" transform="translate(10.7 4.4) rotate(-50)" stroke="#B0B0B0" stroke-width="0.8"/></g></svg>
<div class="a t" style="left:580px;top:238px;font-size:9.4px;color:#000;font-weight:normal;">None</div>
<svg class="a" style="left:612px;top:238px" width="11" height="13" viewBox="0 0 11 13" shape-rendering="crispEdges"><path d="M3 6 V3.8 Q3 1 5.5 1 Q8 1 8 3.8 V6" stroke="#000" stroke-width="2" fill="none" shape-rendering="auto"/><rect x="0.5" y="5.5" width="10" height="6" fill="#8C8C8C" stroke="#000"/><rect x="1" y="12" width="2" height="1" fill="#000"/><rect x="8" y="12" width="2" height="1" fill="#000"/><rect x="4" y="7" width="1" height="3" fill="#000"/><rect x="4" y="9" width="3" height="1" fill="#000"/></svg>
<div class="a" style="left:251px;top:254px;width:155px;height:19px;border:1px solid #8C8C8C;border-right-color:#8C8C8C"></div>
<div class="a" style="left:412px;top:254px;width:213px;height:19px;border-top:1px solid #8C8C8C;border-bottom:1px solid #8C8C8C"></div>
<div class="a" style="left:245px;top:263px;width:1px;height:1px;background:#000;"></div>
<div class="a" style="left:246px;top:263px;width:1px;height:1px;background:#000;"></div>
<div class="a" style="left:248px;top:263px;width:1px;height:1px;background:#000;"></div>
<div class="a" style="left:249px;top:263px;width:1px;height:1px;background:#000;"></div>
<svg class="a" style="left:256px;top:256px" width="13" height="15" viewBox="0 0 13 15" shape-rendering="crispEdges"><rect x="0.5" y="0.5" width="8" height="10" fill="#fff" stroke="#003C3C" stroke-width="1"/><rect x="4" y="4" width="9" height="11" fill="url(#tg)"/><rect x="4.5" y="4.5" width="8" height="10" fill="none" stroke="#003C3C"/><rect x="5" y="5" width="3" height="6" fill="#30E8E8"/><rect x="8" y="4" width="1" height="7" fill="#005050"/></svg>
<div class="a t" style="left:276px;top:259px;font-size:9.4px;color:#000;font-weight:normal;">Raster 2</div>
<svg class="a" style="left:414px;top:259px" width="15" height="10" viewBox="0 0 15 10" shape-rendering="crispEdges"><g shape-rendering="auto" fill="none" stroke="#000"><path d="M0.8 4.2 Q3.5 0.6 7.5 0.8 Q11.5 1 13.8 5.5" stroke-width="2"/><path d="M2 5.8 Q4.5 8.6 7.8 8.6 Q11 8.5 12.8 6.5" stroke-width="1.1"/></g><ellipse cx="7.6" cy="3.8" rx="2.9" ry="3.2" fill="#000" shape-rendering="auto"/><rect x="7" y="3" width="1" height="1" fill="#9A9A9A"/></svg>
<div class="a" style="left:432px;top:256px;width:52px;height:15px;background:linear-gradient(to right,#000 0%,#080808 22%,#fff 100%);border-top:1px solid #505050;border-left:1px solid #202020"></div>
<div class="a t" style="left:437px;top:258px;font-size:9.8px;color:#fff;font-weight:normal;letter-spacing:-0.2px">100</div>
<div class="a" style="left:480px;top:256px;width:4px;height:15px;background:transparent;"></div>
<div class="a" style="left:480px;top:256px;width:4px;height:15px;background:#fff;clip-path:polygon(0 0,100% 0,100% 100%,0 100%,0 93%,100% 60%,100% 40%,0 7%)"></div>
<svg class="a" style="left:480px;top:256px" width="4" height="15" viewBox="0 0 4 15" shape-rendering="crispEdges"><rect x="0" y="1" width="1" height="1" fill="#000"/><rect x="1" y="1" width="1" height="1" fill="#000"/><rect x="2" y="1" width="1" height="1" fill="#000"/><rect x="3" y="1" width="1" height="1" fill="#000"/><rect x="0" y="2" width="1" height="1" fill="#000"/><rect x="1" y="3" width="1" height="1" fill="#000"/><rect x="2" y="4" width="1" height="1" fill="#000"/><rect x="3" y="5" width="1" height="1" fill="#000"/><rect x="3" y="10" width="1" height="1" fill="#000"/><rect x="2" y="11" width="1" height="1" fill="#000"/><rect x="1" y="12" width="1" height="1" fill="#000"/><rect x="0" y="13" width="1" height="1" fill="#000"/><rect x="0" y="14" width="1" height="1" fill="#000"/><rect x="1" y="14" width="1" height="1" fill="#000"/><rect x="2" y="14" width="1" height="1" fill="#000"/><rect x="3" y="14" width="1" height="1" fill="#000"/></svg>
<div class="a" style="left:487px;top:256px;width:71px;height:15px;background:#fff;border-top:1px solid #808080;border-left:1px solid #808080"></div>
<div class="a t" style="left:486px;top:258px;width:61px;text-align:center;font-size:9.4px;color:#000">Normal</div>
<div class="a" style="left:548px;top:256px;width:10px;height:15px;background:#D4D0C8;"></div>
<div class="a" style="left:548px;top:256px;width:10px;height:1px;background:#FFFFFF;"></div>
<div class="a" style="left:548px;top:256px;width:1px;height:15px;background:#FFFFFF;"></div>
<div class="a" style="left:548px;top:270px;width:10px;height:1px;background:#404040;"></div>
<div class="a" style="left:557px;top:256px;width:1px;height:15px;background:#404040;"></div>
<div class="a" style="left:549px;top:269px;width:8px;height:1px;background:#808080;"></div>
<div class="a" style="left:556px;top:257px;width:1px;height:13px;background:#808080;"></div>
<svg class="a" style="left:551px;top:259px" width="4" height="8" viewBox="0 0 4 8" shape-rendering="crispEdges"><path d="M0 0 L4 4 L0 8 Z" fill="#000"/></svg>
<svg class="a" style="left:561px;top:257px" width="16" height="15" viewBox="0 0 16 15" shape-rendering="crispEdges"><g shape-rendering="auto" fill="none"><rect x="-5" y="-2.6" width="10" height="5.2" rx="2.6" transform="translate(5.3 9.6) rotate(-50)" stroke="#505050" stroke-width="1.3"/><rect x="-5" y="-2.6" width="10" height="5.2" rx="2.6" transform="translate(10.7 4.4) rotate(-50)" stroke="#505050" stroke-width="1.3"/><rect x="-5" y="-1.2" width="10" height="2.4" rx="1.2" transform="translate(5.3 9.6) rotate(-50)" stroke="#B0B0B0" stroke-width="0.8"/><rect x="-5" y="-1.2" width="10" height="2.4" rx="1.2" transform="translate(10.7 4.4) rotate(-50)" stroke="#B0B0B0" stroke-width="0.8"/></g></svg>
<div class="a t" style="left:580px;top:258px;font-size:9.4px;color:#000;font-weight:normal;">None</div>
<svg class="a" style="left:612px;top:258px" width="11" height="13" viewBox="0 0 11 13" shape-rendering="crispEdges"><path d="M3 6 V3.8 Q3 1 5.5 1 Q8 1 8 3.8 V6" stroke="#000" stroke-width="2" fill="none" shape-rendering="auto"/><rect x="0.5" y="5.5" width="10" height="6" fill="#8C8C8C" stroke="#000"/><rect x="1" y="12" width="2" height="1" fill="#000"/><rect x="8" y="12" width="2" height="1" fill="#000"/><rect x="4" y="7" width="1" height="3" fill="#000"/><rect x="4" y="9" width="3" height="1" fill="#000"/></svg>
<div class="a" style="left:251px;top:274px;width:155px;height:19px;border:1px solid #8C8C8C;border-right-color:#8C8C8C"></div>
<div class="a" style="left:412px;top:274px;width:213px;height:19px;border-top:1px solid #8C8C8C;border-bottom:1px solid #8C8C8C"></div>
<div class="a" style="left:245px;top:283px;width:1px;height:1px;background:#000;"></div>
<div class="a" style="left:246px;top:283px;width:1px;height:1px;background:#000;"></div>
<div class="a" style="left:248px;top:283px;width:1px;height:1px;background:#000;"></div>
<div class="a" style="left:249px;top:283px;width:1px;height:1px;background:#000;"></div>
<svg class="a" style="left:256px;top:276px" width="13" height="15" viewBox="0 0 13 15" shape-rendering="crispEdges"><rect x="0.5" y="0.5" width="8" height="10" fill="#fff" stroke="#003C3C" stroke-width="1"/><rect x="4" y="4" width="9" height="11" fill="url(#tg)"/><rect x="4.5" y="4.5" width="8" height="10" fill="none" stroke="#003C3C"/><rect x="5" y="5" width="3" height="6" fill="#30E8E8"/><rect x="8" y="4" width="1" height="7" fill="#005050"/></svg>
<div class="a t" style="left:276px;top:279px;font-size:9.4px;color:#000;font-weight:normal;">Raster 1</div>
<svg class="a" style="left:414px;top:279px" width="15" height="10" viewBox="0 0 15 10" shape-rendering="crispEdges"><g shape-rendering="auto" fill="none" stroke="#000"><path d="M0.8 4.2 Q3.5 0.6 7.5 0.8 Q11.5 1 13.8 5.5" stroke-width="2"/><path d="M2 5.8 Q4.5 8.6 7.8 8.6 Q11 8.5 12.8 6.5" stroke-width="1.1"/></g><ellipse cx="7.6" cy="3.8" rx="2.9" ry="3.2" fill="#000" shape-rendering="auto"/><rect x="7" y="3" width="1" height="1" fill="#9A9A9A"/></svg>
<div class="a" style="left:432px;top:276px;width:52px;height:15px;background:linear-gradient(to right,#000 0%,#080808 22%,#fff 100%);border-top:1px solid #505050;border-left:1px solid #202020"></div>
<div class="a t" style="left:437px;top:278px;font-size:9.8px;color:#fff;font-weight:normal;letter-spacing:-0.2px">100</div>
<div class="a" style="left:480px;top:276px;width:4px;height:15px;background:transparent;"></div>
<div class="a" style="left:480px;top:276px;width:4px;height:15px;background:#fff;clip-path:polygon(0 0,100% 0,100% 100%,0 100%,0 93%,100% 60%,100% 40%,0 7%)"></div>
<svg class="a" style="left:480px;top:276px" width="4" height="15" viewBox="0 0 4 15" shape-rendering="crispEdges"><rect x="0" y="1" width="1" height="1" fill="#000"/><rect x="1" y="1" width="1" height="1" fill="#000"/><rect x="2" y="1" width="1" height="1" fill="#000"/><rect x="3" y="1" width="1" height="1" fill="#000"/><rect x="0" y="2" width="1" height="1" fill="#000"/><rect x="1" y="3" width="1" height="1" fill="#000"/><rect x="2" y="4" width="1" height="1" fill="#000"/><rect x="3" y="5" width="1" height="1" fill="#000"/><rect x="3" y="10" width="1" height="1" fill="#000"/><rect x="2" y="11" width="1" height="1" fill="#000"/><rect x="1" y="12" width="1" height="1" fill="#000"/><rect x="0" y="13" width="1" height="1" fill="#000"/><rect x="0" y="14" width="1" height="1" fill="#000"/><rect x="1" y="14" width="1" height="1" fill="#000"/><rect x="2" y="14" width="1" height="1" fill="#000"/><rect x="3" y="14" width="1" height="1" fill="#000"/></svg>
<div class="a" style="left:487px;top:276px;width:71px;height:15px;background:#fff;border-top:1px solid #808080;border-left:1px solid #808080"></div>
<div class="a t" style="left:486px;top:278px;width:61px;text-align:center;font-size:9.4px;color:#000">Normal</div>
<div class="a" style="left:548px;top:276px;width:10px;height:15px;background:#D4D0C8;"></div>
<div class="a" style="left:548px;top:276px;width:10px;height:1px;background:#FFFFFF;"></div>
<div class="a" style="left:548px;top:276px;width:1px;height:15px;background:#FFFFFF;"></div>
<div class="a" style="left:548px;top:290px;width:10px;height:1px;background:#404040;"></div>
<div class="a" style="left:557px;top:276px;width:1px;height:15px;background:#404040;"></div>
<div class="a" style="left:549px;top:289px;width:8px;height:1px;background:#808080;"></div>
<div class="a" style="left:556px;top:277px;width:1px;height:13px;background:#808080;"></div>
<svg class="a" style="left:551px;top:279px" width="4" height="8" viewBox="0 0 4 8" shape-rendering="crispEdges"><path d="M0 0 L4 4 L0 8 Z" fill="#000"/></svg>
<svg class="a" style="left:561px;top:277px" width="16" height="15" viewBox="0 0 16 15" shape-rendering="crispEdges"><g shape-rendering="auto" fill="none"><rect x="-5" y="-2.6" width="10" height="5.2" rx="2.6" transform="translate(5.3 9.6) rotate(-50)" stroke="#505050" stroke-width="1.3"/><rect x="-5" y="-2.6" width="10" height="5.2" rx="2.6" transform="translate(10.7 4.4) rotate(-50)" stroke="#505050" stroke-width="1.3"/><rect x="-5" y="-1.2" width="10" height="2.4" rx="1.2" transform="translate(5.3 9.6) rotate(-50)" stroke="#B0B0B0" stroke-width="0.8"/><rect x="-5" y="-1.2" width="10" height="2.4" rx="1.2" transform="translate(10.7 4.4) rotate(-50)" stroke="#B0B0B0" stroke-width="0.8"/></g></svg>
<div class="a t" style="left:580px;top:278px;font-size:9.4px;color:#000;font-weight:normal;">None</div>
<svg class="a" style="left:612px;top:278px" width="11" height="13" viewBox="0 0 11 13" shape-rendering="crispEdges"><path d="M3 6 V3.8 Q3 1 5.5 1 Q8 1 8 3.8 V6" stroke="#000" stroke-width="2" fill="none" shape-rendering="auto"/><rect x="0.5" y="5.5" width="10" height="6" fill="#8C8C8C" stroke="#000"/><rect x="1" y="12" width="2" height="1" fill="#000"/><rect x="8" y="12" width="2" height="1" fill="#000"/><rect x="4" y="7" width="1" height="3" fill="#000"/><rect x="4" y="9" width="3" height="1" fill="#000"/></svg>
<div class="a" style="left:251px;top:294px;width:155px;height:19px;border:1px solid #8C8C8C;border-right-color:#8C8C8C"></div>
<div class="a" style="left:412px;top:294px;width:213px;height:19px;border-top:1px solid #8C8C8C;border-bottom:1px solid #8C8C8C"></div>
<div class="a" style="left:245px;top:303px;width:1px;height:1px;background:#000;"></div>
<div class="a" style="left:246px;top:303px;width:1px;height:1px;background:#000;"></div>
<div class="a" style="left:248px;top:303px;width:1px;height:1px;background:#000;"></div>
<div class="a" style="left:249px;top:303px;width:1px;height:1px;background:#000;"></div>
<svg class="a" style="left:257px;top:297px" width="11" height="13" viewBox="0 0 11 13" shape-rendering="crispEdges"><rect x="2" y="2" width="9" height="11" fill="#004848"/><rect x="0.5" y="0.5" width="8" height="10" fill="#1A9C9C" stroke="#003030"/></svg>
<div class="a t" style="left:276px;top:299px;font-size:9.4px;color:#000;font-weight:normal;">Background</div>
<svg class="a" style="left:414px;top:299px" width="15" height="10" viewBox="0 0 15 10" shape-rendering="crispEdges"><g shape-rendering="auto" fill="none" stroke="#000"><path d="M0.8 4.2 Q3.5 0.6 7.5 0.8 Q11.5 1 13.8 5.5" stroke-width="2"/><path d="M2 5.8 Q4.5 8.6 7.8 8.6 Q11 8.5 12.8 6.5" stroke-width="1.1"/></g><ellipse cx="7.6" cy="3.8" rx="2.9" ry="3.2" fill="#000" shape-rendering="auto"/><rect x="7" y="3" width="1" height="1" fill="#9A9A9A"/></svg>
<div class="a" style="left:432px;top:296px;width:52px;height:15px;background:repeating-conic-gradient(#fff 0 25%,transparent 0 50%) 0 0/2px 2px,linear-gradient(to right,#000 0%,#080808 22%,#fff 100%);border-top:1px solid #808080;border-left:1px solid #404040"></div>
<div class="a t" style="left:437px;top:298px;font-size:9.8px;color:#fff;letter-spacing:-0.2px;-webkit-mask-image:repeating-conic-gradient(#000 0 25%,rgba(0,0,0,.35) 0 50%);-webkit-mask-size:2px 2px">100</div>
<svg class="a" style="left:480px;top:296px" width="4" height="15" viewBox="0 0 4 15" shape-rendering="crispEdges"><rect x="1" y="1" width="1" height="1" fill="#000"/><rect x="2" y="1" width="1" height="1" fill="#000"/><rect x="3" y="1" width="1" height="1" fill="#000"/><rect x="0" y="2" width="1" height="1" fill="#000"/><rect x="1" y="3" width="1" height="1" fill="#000"/><rect x="2" y="4" width="1" height="1" fill="#000"/><rect x="3" y="5" width="1" height="1" fill="#000"/><rect x="1" y="14" width="1" height="1" fill="#000"/><rect x="3" y="14" width="1" height="1" fill="#000"/></svg>
<div class="a" style="left:487px;top:296px;width:71px;height:15px;background:#fff;border-top:1px solid #808080;border-left:1px solid #808080"></div>
<div class="a t" style="left:486px;top:298px;width:61px;text-align:center;font-size:9.4px;color:#A0A0A0">Normal</div>
<div class="a" style="left:548px;top:296px;width:10px;height:15px;background:#D4D0C8;"></div>
<div class="a" style="left:548px;top:296px;width:10px;height:1px;background:#FFFFFF;"></div>
<div class="a" style="left:548px;top:296px;width:1px;height:15px;background:#FFFFFF;"></div>
<div class="a" style="left:548px;top:310px;width:10px;height:1px;background:#404040;"></div>
<div class="a" style="left:557px;top:296px;width:1px;height:15px;background:#404040;"></div>
<div class="a" style="left:549px;top:309px;width:8px;height:1px;background:#808080;"></div>
<div class="a" style="left:556px;top:297px;width:1px;height:13px;background:#808080;"></div>
<svg class="a" style="left:551px;top:300px" width="3" height="6" viewBox="0 0 3 6" shape-rendering="crispEdges"><path d="M0 0 L3 3 L0 6 Z" fill="#606060"/></svg>
<svg class="a" style="left:561px;top:297px" width="16" height="15" viewBox="0 0 16 15" shape-rendering="crispEdges"><g shape-rendering="auto" fill="none"><rect x="-5" y="-2.6" width="10" height="5.2" rx="2.6" transform="translate(5.3 9.6) rotate(-50)" stroke="#B0B0B0" stroke-width="1.3"/><rect x="-5" y="-2.6" width="10" height="5.2" rx="2.6" transform="translate(10.7 4.4) rotate(-50)" stroke="#B0B0B0" stroke-width="1.3"/><rect x="-5" y="-1.2" width="10" height="2.4" rx="1.2" transform="translate(5.3 9.6) rotate(-50)" stroke="#D8D8D8" stroke-width="0.8"/><rect x="-5" y="-1.2" width="10" height="2.4" rx="1.2" transform="translate(10.7 4.4) rotate(-50)" stroke="#D8D8D8" stroke-width="0.8"/></g></svg>
<div class="a t" style="left:580px;top:298px;font-size:9.4px;color:#606060;font-weight:normal;">None</div>
<svg class="a" style="left:612px;top:298px" width="12" height="13" viewBox="0 0 12 13" shape-rendering="crispEdges"><path d="M3 6 V3.5 Q6 -1 9 3.5 V6" stroke="#606060" stroke-width="1.3" fill="none" stroke-dasharray="1 1"/><rect x="0.5" y="5.5" width="11" height="7" fill="#fff" stroke="#606060" stroke-dasharray="1 1"/></svg>
<div class="a" style="left:245px;top:205px;width:1px;height:1px;background:#000;"></div>
<div class="a" style="left:245px;top:207px;width:1px;height:1px;background:#000;"></div>
<div class="a" style="left:245px;top:209px;width:1px;height:1px;background:#000;"></div>
<div class="a" style="left:245px;top:211px;width:1px;height:1px;background:#000;"></div>
<div class="a" style="left:245px;top:213px;width:1px;height:1px;background:#000;"></div>
<div class="a" style="left:245px;top:215px;width:1px;height:1px;background:#000;"></div>
<div class="a" style="left:245px;top:217px;width:1px;height:1px;background:#000;"></div>
<div class="a" style="left:245px;top:219px;width:1px;height:1px;background:#000;"></div>
<div class="a" style="left:245px;top:221px;width:1px;height:1px;background:#000;"></div>
<div class="a" style="left:245px;top:223px;width:1px;height:1px;background:#000;"></div>
<div class="a" style="left:245px;top:225px;width:1px;height:1px;background:#000;"></div>
<div class="a" style="left:245px;top:227px;width:1px;height:1px;background:#000;"></div>
<div class="a" style="left:245px;top:229px;width:1px;height:1px;background:#000;"></div>
<div class="a" style="left:245px;top:231px;width:1px;height:1px;background:#000;"></div>
<div class="a" style="left:245px;top:233px;width:1px;height:1px;background:#000;"></div>
<div class="a" style="left:245px;top:235px;width:1px;height:1px;background:#000;"></div>
<div class="a" style="left:245px;top:237px;width:1px;height:1px;background:#000;"></div>
<div class="a" style="left:245px;top:239px;width:1px;height:1px;background:#000;"></div>
<div class="a" style="left:245px;top:241px;width:1px;height:1px;background:#000;"></div>
<div class="a" style="left:245px;top:243px;width:1px;height:1px;background:#000;"></div>
<div class="a" style="left:245px;top:245px;width:1px;height:1px;background:#000;"></div>
<div class="a" style="left:245px;top:247px;width:1px;height:1px;background:#000;"></div>
<div class="a" style="left:245px;top:249px;width:1px;height:1px;background:#000;"></div>
<div class="a" style="left:245px;top:251px;width:1px;height:1px;background:#000;"></div>
<div class="a" style="left:245px;top:253px;width:1px;height:1px;background:#000;"></div>
<div class="a" style="left:245px;top:255px;width:1px;height:1px;background:#000;"></div>
<div class="a" style="left:245px;top:257px;width:1px;height:1px;background:#000;"></div>
<div class="a" style="left:245px;top:259px;width:1px;height:1px;background:#000;"></div>
<div class="a" style="left:245px;top:261px;width:1px;height:1px;background:#000;"></div>
<div class="a" style="left:245px;top:263px;width:1px;height:1px;background:#000;"></div>
<div class="a" style="left:245px;top:265px;width:1px;height:1px;background:#000;"></div>
<div class="a" style="left:245px;top:267px;width:1px;height:1px;background:#000;"></div>
<div class="a" style="left:245px;top:269px;width:1px;height:1px;background:#000;"></div>
<div class="a" style="left:245px;top:271px;width:1px;height:1px;background:#000;"></div>
<div class="a" style="left:245px;top:273px;width:1px;height:1px;background:#000;"></div>
<div class="a" style="left:245px;top:275px;width:1px;height:1px;background:#000;"></div>
<div class="a" style="left:245px;top:277px;width:1px;height:1px;background:#000;"></div>
<div class="a" style="left:245px;top:279px;width:1px;height:1px;background:#000;"></div>
<div class="a" style="left:245px;top:281px;width:1px;height:1px;background:#000;"></div>
<div class="a" style="left:245px;top:283px;width:1px;height:1px;background:#000;"></div>
<div class="a" style="left:245px;top:285px;width:1px;height:1px;background:#000;"></div>
<div class="a" style="left:245px;top:287px;width:1px;height:1px;background:#000;"></div>
<div class="a" style="left:245px;top:289px;width:1px;height:1px;background:#000;"></div>
<div class="a" style="left:245px;top:291px;width:1px;height:1px;background:#000;"></div>
<div class="a" style="left:245px;top:293px;width:1px;height:1px;background:#000;"></div>
<div class="a" style="left:245px;top:295px;width:1px;height:1px;background:#000;"></div>
<div class="a" style="left:245px;top:297px;width:1px;height:1px;background:#000;"></div>
<div class="a" style="left:245px;top:299px;width:1px;height:1px;background:#000;"></div>
<div class="a" style="left:245px;top:301px;width:1px;height:1px;background:#000;"></div>
<div class="a" style="left:245px;top:303px;width:1px;height:1px;background:#000;"></div>
<div class="a" style="left:241px;top:328px;width:165px;height:16px;background-image:repeating-conic-gradient(#D4D0C8 0 25%,#fff 0 50%);background-size:2px 2px"></div>
<div class="a" style="left:241px;top:328px;width:16px;height:16px;background:#D4D0C8;"></div>
<div class="a" style="left:241px;top:328px;width:16px;height:1px;background:#FFFFFF;"></div>
<div class="a" style="left:241px;top:328px;width:1px;height:16px;background:#FFFFFF;"></div>
<div class="a" style="left:241px;top:343px;width:16px;height:1px;background:#404040;"></div>
<div class="a" style="left:256px;top:328px;width:1px;height:16px;background:#404040;"></div>
<div class="a" style="left:242px;top:342px;width:14px;height:1px;background:#808080;"></div>
<div class="a" style="left:255px;top:329px;width:1px;height:14px;background:#808080;"></div>
<svg class="a" style="left:246px;top:332px" width="4" height="8" viewBox="0 0 4 8" shape-rendering="crispEdges"><path d="M4 0 L0 4 L4 8 Z" fill="#808080"/></svg>
<div class="a" style="left:390px;top:328px;width:16px;height:16px;background:#D4D0C8;"></div>
<div class="a" style="left:390px;top:328px;width:16px;height:1px;background:#FFFFFF;"></div>
<div class="a" style="left:390px;top:328px;width:1px;height:16px;background:#FFFFFF;"></div>
<div class="a" style="left:390px;top:343px;width:16px;height:1px;background:#404040;"></div>
<div class="a" style="left:405px;top:328px;width:1px;height:16px;background:#404040;"></div>
<div class="a" style="left:391px;top:342px;width:14px;height:1px;background:#808080;"></div>
<div class="a" style="left:404px;top:329px;width:1px;height:14px;background:#808080;"></div>
<svg class="a" style="left:396px;top:332px" width="4" height="8" viewBox="0 0 4 8" shape-rendering="crispEdges"><path d="M0 0 L4 4 L0 8 Z" fill="#808080"/></svg>
<div class="a" style="left:412px;top:328px;width:213px;height:16px;background-image:repeating-conic-gradient(#D4D0C8 0 25%,#fff 0 50%);background-size:2px 2px"></div>
<div class="a" style="left:412px;top:328px;width:16px;height:16px;background:#D4D0C8;"></div>
<div class="a" style="left:412px;top:328px;width:16px;height:1px;background:#FFFFFF;"></div>
<div class="a" style="left:412px;top:328px;width:1px;height:16px;background:#FFFFFF;"></div>
<div class="a" style="left:412px;top:343px;width:16px;height:1px;background:#404040;"></div>
<div class="a" style="left:427px;top:328px;width:1px;height:16px;background:#404040;"></div>
<div class="a" style="left:413px;top:342px;width:14px;height:1px;background:#808080;"></div>
<div class="a" style="left:426px;top:329px;width:1px;height:14px;background:#808080;"></div>
<svg class="a" style="left:417px;top:332px" width="4" height="8" viewBox="0 0 4 8" shape-rendering="crispEdges"><path d="M4 0 L0 4 L4 8 Z" fill="#000"/></svg>
<div class="a" style="left:428px;top:328px;width:165px;height:16px;background:#D4D0C8;"></div>
<div class="a" style="left:428px;top:328px;width:165px;height:1px;background:#FFFFFF;"></div>
<div class="a" style="left:428px;top:328px;width:1px;height:16px;background:#FFFFFF;"></div>
<div class="a" style="left:428px;top:343px;width:165px;height:1px;background:#404040;"></div>
<div class="a" style="left:592px;top:328px;width:1px;height:16px;background:#404040;"></div>
<div class="a" style="left:429px;top:342px;width:163px;height:1px;background:#808080;"></div>
<div class="a" style="left:591px;top:329px;width:1px;height:14px;background:#808080;"></div>
<div class="a" style="left:609px;top:328px;width:16px;height:16px;background:#D4D0C8;"></div>
<div class="a" style="left:609px;top:328px;width:16px;height:1px;background:#FFFFFF;"></div>
<div class="a" style="left:609px;top:328px;width:1px;height:16px;background:#FFFFFF;"></div>
<div class="a" style="left:609px;top:343px;width:16px;height:1px;background:#404040;"></div>
<div class="a" style="left:624px;top:328px;width:1px;height:16px;background:#404040;"></div>
<div class="a" style="left:610px;top:342px;width:14px;height:1px;background:#808080;"></div>
<div class="a" style="left:623px;top:329px;width:1px;height:14px;background:#808080;"></div>
<svg class="a" style="left:615px;top:332px" width="4" height="8" viewBox="0 0 4 8" shape-rendering="crispEdges"><path d="M0 0 L4 4 L0 8 Z" fill="#000"/></svg>
<svg class="a" style="left:7px;top:15px" width="14" height="14" viewBox="0 0 14 14" shape-rendering="crispEdges"><rect width="14" height="14" fill="#000"/><rect x="1" y="1" width="2" height="12" fill="#2A8CF0"/><rect x="3" y="1" width="8" height="6" fill="#E8ECF0"/><rect x="3" y="7" width="10" height="1" fill="#2A8CF0"/><rect x="9" y="10" width="2" height="3" fill="#F0F0F0"/><rect x="12" y="2" width="1" height="1" fill="#888"/><rect x="12" y="5" width="1" height="1" fill="#888"/><rect x="12" y="10" width="1" height="1" fill="#888"/></svg>
<svg class="a" style="left:36px;top:14px" width="17" height="16" viewBox="0 0 17 16" shape-rendering="crispEdges"><path d="M4.5 1.5 H13.5 L12 6.5 H3 Z" fill="#fff" stroke="#000"/><rect x="5" y="3" width="6" height="1" fill="#000"/><rect x="4" y="5" width="6" height="1" fill="#000"/><rect x="0.5" y="6.5" width="15" height="8" rx="1.5" fill="#E8E8E0" stroke="#000"/><rect x="1" y="8" width="14" height="1" fill="#000"/><rect x="1" y="10" width="14" height="2" fill="#C8D0B8"/><rect x="1" y="12" width="14" height="1" fill="#000"/><rect x="14" y="7" width="2" height="7" fill="#000"/><rect x="13" y="8" width="1" height="1" fill="#fff"/><rect x="13" y="11" width="1" height="1" fill="#fff"/></svg>
<svg class="a" style="left:66px;top:15px" width="16" height="13" viewBox="0 0 16 13" shape-rendering="crispEdges"><path d="M2.5 4.5 L5.5 1.5 H11.5 L13.5 3.5 V5.5 L9.5 9.5" stroke="#000" stroke-width="1.2" fill="none"/><path d="M1 2 L1 7 L5 7 Z" fill="#000"/><rect x="1" y="12" width="8" height="1" fill="#000"/><rect x="10" y="12" width="1" height="1" fill="#000"/><rect x="12" y="12" width="1" height="1" fill="#000"/><rect x="14" y="12" width="1" height="1" fill="#000"/></svg>
<svg class="a" style="left:89px;top:15px" width="16" height="13" viewBox="0 0 16 13" shape-rendering="crispEdges"><path d="M13.5 4.5 L10.5 1.5 H4.5 L2.5 3.5 V5.5 L6.5 9.5" stroke="#808080" stroke-width="1.2" fill="none"/><path d="M15 2 L15 7 L11 7 Z" fill="#808080"/><rect x="1" y="12" width="8" height="1" fill="#808080"/><rect x="10" y="12" width="1" height="1" fill="#808080"/><rect x="12" y="12" width="1" height="1" fill="#808080"/><rect x="14" y="12" width="1" height="1" fill="#808080"/></svg>
<svg class="a" style="left:120px;top:13px" width="11" height="17" viewBox="0 0 11 17" shape-rendering="crispEdges"><path d="M1.5 0.5 L7.5 10 M8.5 0.5 L3 10" stroke="#000" stroke-width="1.3" fill="none" shape-rendering="auto"/><ellipse cx="3" cy="13" rx="2" ry="3" fill="#9CE8F8" stroke="#0058A8" stroke-width="1.2" shape-rendering="auto"/><ellipse cx="8" cy="13" rx="2" ry="3" fill="#D8F4FC" stroke="#0058A8" stroke-width="1.2" shape-rendering="auto"/></svg>
<svg class="a" style="left:141px;top:15px" width="16" height="13" viewBox="0 0 16 13" shape-rendering="crispEdges"><path d="M0.5 0.5 H5.5 L7.5 2.5 V9.5 H0.5 Z" fill="#fff" stroke="#000" stroke-width="1"/><rect x="2" y="3" width="3" height="1" fill="#000"/><rect x="2" y="5" width="4" height="1" fill="#000"/><rect x="2" y="7" width="4" height="1" fill="#000"/><path d="M6.5 3.5 H12 L14.5 6 V12.5 H6.5 Z" fill="#fff" stroke="#000080" stroke-width="1"/><rect x="8" y="6" width="3" height="1" fill="#000080"/><rect x="8" y="8" width="5" height="1" fill="#000080"/><rect x="8" y="10" width="5" height="1" fill="#000080"/></svg>
<svg class="a" style="left:178px;top:14px" width="12" height="17" viewBox="0 0 12 17" shape-rendering="crispEdges"><path d="M1.5 0.5 V13 L4.5 10 L7 15.5 L9 14.5 L6.8 9.5 H10.5 Z" fill="#fff" stroke="#000" stroke-width="1" stroke-linejoin="miter"/></svg>
<svg class="a" style="left:198px;top:20px" width="5" height="3" viewBox="0 0 5 3" shape-rendering="crispEdges"><path d="M0 0 H5 L2.5 3 Z" fill="#000"/><rect x="0" y="0" width="5" height="1" fill="#000"/><rect x="1" y="1" width="3" height="1" fill="#000"/><rect x="2" y="2" width="1" height="1" fill="#000"/></svg>
<svg class="a" style="left:212px;top:15px" width="16" height="14" viewBox="0 0 16 14" shape-rendering="crispEdges"><rect x="1.5" y="1.5" width="12" height="11" fill="none" stroke="#808080" stroke-dasharray="1 1"/><rect x="1" y="1" width="2" height="2" fill="#000"/><rect x="7" y="1" width="2" height="2" fill="#000"/><rect x="13" y="1" width="2" height="2" fill="#000"/><rect x="1" y="6" width="2" height="2" fill="#000"/><rect x="13" y="6" width="2" height="2" fill="#000"/><rect x="1" y="12" width="2" height="2" fill="#000"/><rect x="7" y="12" width="2" height="2" fill="#000"/><rect x="13" y="12" width="2" height="2" fill="#000"/><rect x="7" y="7" width="2" height="2" fill="#000"/><rect x="7" y="4" width="2" height="3" fill="#A0A0A0"/></svg>
<svg class="a" style="left:234px;top:20px" width="5" height="3" viewBox="0 0 5 3" shape-rendering="crispEdges"><path d="M0 0 H5 L2.5 3 Z" fill="#000"/><rect x="0" y="0" width="5" height="1" fill="#000"/><rect x="1" y="1" width="3" height="1" fill="#000"/><rect x="2" y="2" width="1" height="1" fill="#000"/></svg>
<svg class="a" style="left:251px;top:16px" width="14" height="13" viewBox="0 0 14 13" shape-rendering="crispEdges"><path d="M4.5 0 V8.5 H13" stroke="#000" stroke-width="1.6" fill="none"/><path d="M1 2.5 H10.5 V12" stroke="#000" stroke-width="1.6" fill="none"/><path d="M5 8 L12 1" stroke="#000" stroke-width="1" fill="none" shape-rendering="auto"/></svg>
<svg class="a" style="left:277px;top:13px" width="17" height="17" viewBox="0 0 17 17" shape-rendering="crispEdges"><path d="M8.5 2 V15 M2 8.5 H15" stroke="#000" stroke-width="1.6"/><path d="M8.5 0 L11.5 3.5 H5.5 Z M8.5 17 L11.5 13.5 H5.5 Z M0 8.5 L3.5 5.5 V11.5 Z M17 8.5 L13.5 5.5 V11.5 Z" fill="#000"/></svg>
<svg class="a" style="left:304px;top:17px" width="16" height="11" viewBox="0 0 16 11" shape-rendering="crispEdges"><rect x="1" y="1" width="14" height="9" fill="none" stroke="#000" stroke-width="2" stroke-dasharray="2 2"/></svg>
<svg class="a" style="left:326px;top:20px" width="5" height="3" viewBox="0 0 5 3" shape-rendering="crispEdges"><path d="M0 0 H5 L2.5 3 Z" fill="#000"/><rect x="0" y="0" width="5" height="1" fill="#000"/><rect x="1" y="1" width="3" height="1" fill="#000"/><rect x="2" y="2" width="1" height="1" fill="#000"/></svg>
<svg class="a" style="left:340px;top:13px" width="17" height="17" viewBox="0 0 17 17" shape-rendering="crispEdges"><path d="M2 13 L10 5" stroke="#000" stroke-width="3" stroke-linecap="round" shape-rendering="auto"/><path d="M2.5 12.5 L9.5 5.5" stroke="#A0C8F0" stroke-width="1" shape-rendering="auto"/><ellipse cx="13" cy="3.5" rx="3.5" ry="3" transform="rotate(-45 13 3.5)" fill="#1848A8" stroke="#0A2060" shape-rendering="auto"/><rect x="1" y="15" width="7" height="2" fill="#30E0E0"/></svg>
<svg class="a" style="left:362px;top:20px" width="5" height="3" viewBox="0 0 5 3" shape-rendering="crispEdges"><path d="M0 0 H5 L2.5 3 Z" fill="#000"/><rect x="0" y="0" width="5" height="1" fill="#000"/><rect x="1" y="1" width="3" height="1" fill="#000"/><rect x="2" y="2" width="1" height="1" fill="#000"/></svg>
<svg class="a" style="left:375px;top:14px" width="18" height="16" viewBox="0 0 18 16" shape-rendering="crispEdges"><path d="M1 15 Q4 9 11 6 L13 9 Q7 14 1 15 Z" fill="#2070C0" stroke="#0A2870" stroke-width="1" shape-rendering="auto"/><path d="M3 13 Q6 10 10 8" stroke="#80C8F0" stroke-width="1" fill="none" shape-rendering="auto"/><path d="M11 6 L16 1 L18 3 L13 9 Z" fill="#B88040" stroke="#603010" stroke-width="0.8" shape-rendering="auto"/></svg>
<svg class="a" style="left:398px;top:20px" width="5" height="3" viewBox="0 0 5 3" shape-rendering="crispEdges"><path d="M0 0 H5 L2.5 3 Z" fill="#000"/><rect x="0" y="0" width="5" height="1" fill="#000"/><rect x="1" y="1" width="3" height="1" fill="#000"/><rect x="2" y="2" width="1" height="1" fill="#000"/></svg>
<svg class="a" style="left:411px;top:14px" width="18" height="16" viewBox="0 0 18 16" shape-rendering="crispEdges"><circle cx="5" cy="3.5" r="3" fill="#20A8A0" stroke="#105050" shape-rendering="auto"/><path d="M0.5 15.5 V9 Q1 7 3 7 H9 V15.5 Z" fill="#108880" stroke="#105050"/><circle cx="13" cy="3.5" r="3" fill="#C8C8C8" stroke="#606060" shape-rendering="auto"/><path d="M9 15.5 V7 H15 Q17 7 17 9 V15.5 Z" fill="#707070" stroke="#404040"/><path d="M3 11.5 H13" stroke="#fff" stroke-width="2"/><path d="M12 8 L16 11.5 L12 15 Z" fill="#fff"/></svg>
<svg class="a" style="left:434px;top:20px" width="5" height="3" viewBox="0 0 5 3" shape-rendering="crispEdges"><path d="M0 0 H5 L2.5 3 Z" fill="#000"/><rect x="0" y="0" width="5" height="1" fill="#000"/><rect x="1" y="1" width="3" height="1" fill="#000"/><rect x="2" y="2" width="1" height="1" fill="#000"/></svg>
<div class="a" style="left:449px;top:15px;width:14px;height:14px;border-radius:50%;background:radial-gradient(circle,#B8B8B8 0 18%,#6A6A6A 40%,#808080 62%,rgba(212,208,200,0) 75%)"></div>
<svg class="a" style="left:470px;top:20px" width="5" height="3" viewBox="0 0 5 3" shape-rendering="crispEdges"><path d="M0 0 H5 L2.5 3 Z" fill="#000"/><rect x="0" y="0" width="5" height="1" fill="#000"/><rect x="1" y="1" width="3" height="1" fill="#000"/><rect x="2" y="2" width="1" height="1" fill="#000"/></svg>
<svg class="a" style="left:483px;top:12px" width="18" height="19" viewBox="0 0 18 19" shape-rendering="crispEdges"><path d="M1 9 Q1 3 5 1 Q9 -0.5 12 2 L13 10 L7 14 Q2 13 1 9 Z" fill="url(#rb)"/><circle cx="12.5" cy="13" r="4.3" fill="#fff" stroke="#D00000" stroke-width="1.6" shape-rendering="auto"/><circle cx="12.5" cy="13" r="1.6" fill="#D00000" shape-rendering="auto"/></svg>
<svg class="a" style="left:506px;top:20px" width="5" height="3" viewBox="0 0 5 3" shape-rendering="crispEdges"><path d="M0 0 H5 L2.5 3 Z" fill="#000"/><rect x="0" y="0" width="5" height="1" fill="#000"/><rect x="1" y="1" width="3" height="1" fill="#000"/><rect x="2" y="2" width="1" height="1" fill="#000"/></svg>
<svg class="a" style="left:519px;top:13px" width="18" height="17" viewBox="0 0 18 17" shape-rendering="crispEdges"><path d="M6 13 L15 3 Q17 2 17 4 L9 15 Z" fill="#E8B848" stroke="#604010" stroke-width="0.8" shape-rendering="auto"/><path d="M1 14 Q1 10 5 9 L9 13 Q7 16 3 16 Z" fill="#E03040" stroke="#701018" stroke-width="0.8" shape-rendering="auto"/><path d="M2.5 12 Q3.5 10 5 10.5" stroke="#FFB0B0" fill="none" shape-rendering="auto"/></svg>
<svg class="a" style="left:542px;top:20px" width="5" height="3" viewBox="0 0 5 3" shape-rendering="crispEdges"><path d="M0 0 H5 L2.5 3 Z" fill="#000"/><rect x="0" y="0" width="5" height="1" fill="#000"/><rect x="1" y="1" width="3" height="1" fill="#000"/><rect x="2" y="2" width="1" height="1" fill="#000"/></svg>
<svg class="a" style="left:557px;top:13px" width="19" height="18" viewBox="0 0 19 18" shape-rendering="crispEdges"><defs><linearGradient id="ag" x1="0" y1="0" x2="1" y2="1"><stop offset="0" stop-color="#0A1A3A"/><stop offset="0.5" stop-color="#6890C0"/><stop offset="1" stop-color="#0A1A3A"/></linearGradient></defs><path d="M5 8.5 L12.5 1.5 Q15.5 -0.5 17 2 Q18 4 15.5 6.5 L8.5 12.5 Z" fill="url(#ag)" stroke="#0A1830" stroke-width="1" shape-rendering="auto"/><path d="M5 8.5 L8.5 12.5 L5 13.5 L2.5 11 Z" fill="#F0F0F0" stroke="#000" stroke-width="1" shape-rendering="auto"/><circle cx="3" cy="15.5" r="1.9" fill="#000820"/><circle cx="8" cy="15.5" r="1.9" fill="#103060"/><circle cx="13" cy="15.5" r="1.9" fill="#2868B0"/></svg>
<svg class="a" style="left:585px;top:13px" width="18" height="16" viewBox="0 0 18 16" shape-rendering="crispEdges"><defs><linearGradient id="fg" x1="0" y1="0" x2="1" y2="1"><stop offset="0" stop-color="#1A3A6A"/><stop offset="0.45" stop-color="#A8C8F0"/><stop offset="1" stop-color="#1A3A6A"/></linearGradient></defs><path d="M3 7.5 L9.5 1 L17 8 L10 15 Z" fill="url(#fg)" stroke="#000" stroke-width="1.2" shape-rendering="auto"/><rect x="2" y="10" width="1" height="4" fill="#000060"/><path d="M0.5 13 L2.5 15.5 L4.5 13 Z" fill="#000060"/></svg>
<div class="a t" style="left:614px;top:13px;font-family:'Liberation Serif',serif;font-size:20px;font-weight:normal;line-height:18px;-webkit-text-stroke:0.3px #000">A</div>
<div class="a" style="left:636px;top:11px;width:27px;height:21px;background:#B6BDD2;border:1px solid #0A246A"></div>
<svg class="a" style="left:641px;top:14px" width="18" height="15" viewBox="0 0 18 15" shape-rendering="crispEdges"><rect x="0.5" y="0.5" width="12" height="10" fill="#208080" stroke="#000"/><ellipse cx="9.5" cy="9.5" rx="6.5" ry="5" fill="#00E8F8" stroke="#10A0A8" shape-rendering="auto"/></svg>
<svg class="a" style="left:670px;top:13px" width="17" height="18" viewBox="0 0 17 18" shape-rendering="crispEdges"><defs><linearGradient id="pg" x1="0" y1="0" x2="1" y2="1"><stop offset="0" stop-color="#102040"/><stop offset="0.5" stop-color="#90B8E8"/><stop offset="1" stop-color="#102040"/></linearGradient></defs><path d="M6 9 L12.5 2.5 Q14.5 0.5 16 2 Q17.5 3.5 15.5 5.5 L9 12 Z" fill="url(#pg)" stroke="#0A1838" stroke-width="1" shape-rendering="auto"/><path d="M6 9 L9 12 L6 15 L1.5 17 L2.5 12.5 Z" fill="#fff" stroke="#000" stroke-width="1.1" shape-rendering="auto"/><path d="M2 16.5 L5 13.5" stroke="#000" stroke-width="0.8" shape-rendering="auto"/></svg>
<svg class="a" style="left:697px;top:13px" width="17" height="17" viewBox="0 0 17 17" shape-rendering="crispEdges"><rect x="2.5" y="2.5" width="12" height="12" fill="none" stroke="#707070"/><circle cx="2.5" cy="2.5" r="1.5" fill="#fff" stroke="#606060" stroke-width="0.8" shape-rendering="auto"/><circle cx="14.5" cy="2.5" r="1.5" fill="#fff" stroke="#606060" stroke-width="0.8" shape-rendering="auto"/><circle cx="2.5" cy="14.5" r="1.5" fill="#fff" stroke="#606060" stroke-width="0.8" shape-rendering="auto"/><circle cx="14.5" cy="14.5" r="1.5" fill="#fff" stroke="#606060" stroke-width="0.8" shape-rendering="auto"/><path d="M5.5 4.5 V12 L7.5 10 L9.5 13 L11 12 L9 9 H12 Z" fill="#fff" stroke="#606060" stroke-width="1"/></svg>
<div class="a" style="left:0px;top:40px;width:15px;height:34px;background:#D4D0C8;"></div>
<div class="a" style="left:0px;top:40px;width:15px;height:1px;background:#FFFFFF;"></div>
<div class="a" style="left:14px;top:40px;width:1px;height:34px;background:#404040;"></div>
<div class="a" style="left:13px;top:41px;width:1px;height:32px;background:#808080;"></div>
<div class="a" style="left:0px;top:73px;width:15px;height:1px;background:#404040;"></div>
<div class="a" style="left:0px;top:72px;width:14px;height:1px;background:#808080;"></div>
<div class="a" style="left:0px;top:43px;width:1px;height:26px;background:#808080;"></div>
<div class="a" style="left:1px;top:43px;width:3px;height:26px;background:#FFFFFF;"></div>
<svg class="a" style="left:6px;top:55px" width="5" height="3" viewBox="0 0 5 3" shape-rendering="crispEdges"><path d="M0 0 H5 L2.5 3 Z" fill="#000"/><rect x="0" y="0" width="5" height="1" fill="#000"/><rect x="1" y="1" width="3" height="1" fill="#000"/><rect x="2" y="2" width="1" height="1" fill="#000"/></svg>
<div class="a" style="left:23px;top:44px;width:3px;height:1px;background:#808080;"></div>
<div class="a" style="left:23px;top:46px;width:3px;height:1px;background:#808080;"></div>
<div class="a" style="left:23px;top:48px;width:3px;height:1px;background:#808080;"></div>
<div class="a" style="left:23px;top:50px;width:3px;height:1px;background:#808080;"></div>
<div class="a" style="left:23px;top:52px;width:3px;height:1px;background:#808080;"></div>
<div class="a" style="left:23px;top:54px;width:3px;height:1px;background:#808080;"></div>
<div class="a" style="left:23px;top:56px;width:3px;height:1px;background:#808080;"></div>
<div class="a" style="left:23px;top:58px;width:3px;height:1px;background:#808080;"></div>
<div class="a" style="left:23px;top:60px;width:3px;height:1px;background:#808080;"></div>
<div class="a" style="left:23px;top:62px;width:3px;height:1px;background:#808080;"></div>
<div class="a" style="left:23px;top:64px;width:3px;height:1px;background:#808080;"></div>
<div class="a" style="left:23px;top:66px;width:3px;height:1px;background:#808080;"></div>
<div class="a" style="left:23px;top:68px;width:3px;height:1px;background:#808080;"></div>
<div class="a" style="left:23px;top:70px;width:3px;height:1px;background:#808080;"></div>
<div class="a" style="left:30px;top:42px;width:13px;height:13px;background:#FFFFFF;"></div>
<div class="a" style="left:30px;top:42px;width:13px;height:1px;background:#808080;"></div>
<div class="a" style="left:30px;top:42px;width:1px;height:13px;background:#808080;"></div>
<div class="a" style="left:31px;top:43px;width:11px;height:1px;background:#404040;"></div>
<div class="a" style="left:31px;top:43px;width:1px;height:11px;background:#404040;"></div>
<div class="a" style="left:30px;top:54px;width:13px;height:1px;background:#FFFFFF;"></div>
<div class="a" style="left:42px;top:42px;width:1px;height:13px;background:#FFFFFF;"></div>
<div class="a" style="left:31px;top:53px;width:11px;height:1px;background:#D4D0C8;"></div>
<div class="a" style="left:41px;top:43px;width:1px;height:11px;background:#D4D0C8;"></div>
<div class="a" style="left:30px;top:60px;width:13px;height:13px;background:#FFFFFF;"></div>
<div class="a" style="left:30px;top:60px;width:13px;height:1px;background:#808080;"></div>
<div class="a" style="left:30px;top:60px;width:1px;height:13px;background:#808080;"></div>
<div class="a" style="left:31px;top:61px;width:11px;height:1px;background:#404040;"></div>
<div class="a" style="left:31px;top:61px;width:1px;height:11px;background:#404040;"></div>
<div class="a" style="left:30px;top:72px;width:13px;height:1px;background:#FFFFFF;"></div>
<div class="a" style="left:42px;top:60px;width:1px;height:13px;background:#FFFFFF;"></div>
<div class="a" style="left:31px;top:71px;width:11px;height:1px;background:#D4D0C8;"></div>
<div class="a" style="left:41px;top:61px;width:1px;height:11px;background:#D4D0C8;"></div>
<div class="a" style="left:105px;top:43px;width:13px;height:13px;background:#FFFFFF;"></div>
<div class="a" style="left:105px;top:43px;width:13px;height:1px;background:#808080;"></div>
<div class="a" style="left:105px;top:43px;width:1px;height:13px;background:#808080;"></div>
<div class="a" style="left:106px;top:44px;width:11px;height:1px;background:#404040;"></div>
<div class="a" style="left:106px;top:44px;width:1px;height:11px;background:#404040;"></div>
<div class="a" style="left:105px;top:55px;width:13px;height:1px;background:#FFFFFF;"></div>
<div class="a" style="left:117px;top:43px;width:1px;height:13px;background:#FFFFFF;"></div>
<div class="a" style="left:106px;top:54px;width:11px;height:1px;background:#D4D0C8;"></div>
<div class="a" style="left:116px;top:44px;width:1px;height:11px;background:#D4D0C8;"></div>
<svg class="a" style="left:108px;top:46px" width="7" height="7" viewBox="0 0 7 7" shape-rendering="crispEdges"><rect x="0" y="2" width="1" height="3" fill="#000"/><rect x="1" y="3" width="1" height="3" fill="#000"/><rect x="2" y="4" width="1" height="3" fill="#000"/><rect x="3" y="3" width="1" height="3" fill="#000"/><rect x="4" y="2" width="1" height="3" fill="#000"/><rect x="5" y="1" width="1" height="3" fill="#000"/><rect x="6" y="0" width="1" height="3" fill="#000"/></svg>
<div class="a t" style="left:47px;top:44px;font-size:9.4px;color:#000;font-weight:normal;">Retain style</div>
<div class="a t" style="left:47px;top:62px;font-size:9.4px;color:#000;font-weight:normal;">Anti-alias</div>
<div class="a t" style="left:122px;top:45px;font-size:9.4px;color:#000;font-weight:normal;">Create as vector</div>
<div class="a" style="left:200px;top:42px;width:1px;height:31px;background:#A0A0A0;"></div>
<div class="a" style="left:201px;top:42px;width:1px;height:31px;background:#FFFFFF;"></div>
<div class="a t" style="left:209px;top:40px;font-size:9.4px;color:#000;font-weight:normal;">Line Style:</div>
<div class="a" style="left:209px;top:51px;width:173px;height:21px;background:#FFFFFF;"></div>
<div class="a" style="left:209px;top:51px;width:173px;height:1px;background:#D4D0C8;"></div>
<div class="a" style="left:209px;top:51px;width:1px;height:21px;background:#D4D0C8;"></div>
<div class="a" style="left:210px;top:52px;width:171px;height:1px;background:#FFFFFF;"></div>
<div class="a" style="left:210px;top:52px;width:1px;height:19px;background:#FFFFFF;"></div>
<div class="a" style="left:209px;top:71px;width:173px;height:1px;background:#404040;"></div>
<div class="a" style="left:381px;top:51px;width:1px;height:21px;background:#404040;"></div>
<div class="a" style="left:210px;top:70px;width:171px;height:1px;background:#808080;"></div>
<div class="a" style="left:380px;top:52px;width:1px;height:19px;background:#808080;"></div>
<div class="a" style="left:219px;top:60px;width:138px;height:2px;background:#A0A0A0;"></div>
<div class="a" style="left:371px;top:53px;width:9px;height:17px;background:#D4D0C8;"></div>
<svg class="a" style="left:373px;top:60px" width="5" height="3" viewBox="0 0 5 3" shape-rendering="crispEdges"><path d="M0 0 H5 L2.5 3 Z" fill="#000"/><rect x="0" y="0" width="5" height="1" fill="#000"/><rect x="1" y="1" width="3" height="1" fill="#000"/><rect x="2" y="2" width="1" height="1" fill="#000"/></svg>
<div class="a t" style="left:390px;top:40px;font-size:9.4px;color:#000;font-weight:normal;">Width:</div>
<div class="a" style="left:390px;top:51px;width:70px;height:22px;background:#FFFFFF;"></div>
<div class="a" style="left:390px;top:51px;width:70px;height:1px;background:#808080;"></div>
<div class="a" style="left:390px;top:51px;width:1px;height:22px;background:#808080;"></div>
<div class="a" style="left:391px;top:52px;width:68px;height:1px;background:#404040;"></div>
<div class="a" style="left:391px;top:52px;width:1px;height:20px;background:#404040;"></div>
<div class="a" style="left:390px;top:72px;width:70px;height:1px;background:#FFFFFF;"></div>
<div class="a" style="left:459px;top:51px;width:1px;height:22px;background:#FFFFFF;"></div>
<div class="a" style="left:391px;top:71px;width:68px;height:1px;background:#D4D0C8;"></div>
<div class="a" style="left:458px;top:52px;width:1px;height:20px;background:#D4D0C8;"></div>
<div class="a" style="left:392px;top:69px;width:67px;height:2px;background:#D4D0C8;"></div>
<div class="a t" style="left:393px;top:54px;font-size:10px;color:#000;font-weight:normal;">0.75</div>
<div class="a" style="left:437px;top:53px;width:11px;height:8px;background:#D4D0C8;"></div>
<div class="a" style="left:437px;top:53px;width:11px;height:1px;background:#FFFFFF;"></div>
<div class="a" style="left:437px;top:53px;width:1px;height:8px;background:#FFFFFF;"></div>
<div class="a" style="left:437px;top:60px;width:11px;height:1px;background:#404040;"></div>
<div class="a" style="left:447px;top:53px;width:1px;height:8px;background:#404040;"></div>
<div class="a" style="left:438px;top:59px;width:9px;height:1px;background:#808080;"></div>
<div class="a" style="left:446px;top:54px;width:1px;height:6px;background:#808080;"></div>
<div class="a" style="left:437px;top:61px;width:11px;height:8px;background:#D4D0C8;"></div>
<div class="a" style="left:437px;top:61px;width:11px;height:1px;background:#FFFFFF;"></div>
<div class="a" style="left:437px;top:61px;width:1px;height:8px;background:#FFFFFF;"></div>
<div class="a" style="left:437px;top:68px;width:11px;height:1px;background:#404040;"></div>
<div class="a" style="left:447px;top:61px;width:1px;height:8px;background:#404040;"></div>
<div class="a" style="left:438px;top:67px;width:9px;height:1px;background:#808080;"></div>
<div class="a" style="left:446px;top:62px;width:1px;height:6px;background:#808080;"></div>
<svg class="a" style="left:441px;top:56px" width="3" height="2" viewBox="0 0 3 2" shape-rendering="crispEdges"><rect x="1" y="0" width="1" height="1" fill="#000"/><rect x="0" y="1" width="3" height="1" fill="#000"/></svg>
<svg class="a" style="left:441px;top:64px" width="3" height="2" viewBox="0 0 3 2" shape-rendering="crispEdges"><rect x="0" y="0" width="3" height="1" fill="#000"/><rect x="1" y="1" width="1" height="1" fill="#000"/></svg>
<div class="a" style="left:448px;top:53px;width:11px;height:16px;background:#D4D0C8;"></div>
<div class="a" style="left:448px;top:53px;width:11px;height:1px;background:#FFFFFF;"></div>
<div class="a" style="left:448px;top:53px;width:1px;height:16px;background:#FFFFFF;"></div>
<div class="a" style="left:448px;top:68px;width:11px;height:1px;background:#404040;"></div>
<div class="a" style="left:458px;top:53px;width:1px;height:16px;background:#404040;"></div>
<div class="a" style="left:449px;top:67px;width:9px;height:1px;background:#808080;"></div>
<div class="a" style="left:457px;top:54px;width:1px;height:14px;background:#808080;"></div>
<svg class="a" style="left:451px;top:59px" width="6" height="5" viewBox="0 0 6 5" shape-rendering="crispEdges"><path d="M0 0 H6 L3 3 Z" fill="#000"/><rect x="0" y="0" width="6" height="1" fill="#000"/><rect x="1" y="1" width="4" height="1" fill="#000"/><rect x="2" y="2" width="2" height="1" fill="#000"/><rect x="0" y="4" width="6" height="1" fill="#000"/></svg>
<div class="a t" style="left:468px;top:40px;font-size:9.4px;color:#000;font-weight:normal;">Join:</div>
<div class="a" style="left:468px;top:51px;width:36px;height:21px;background:#FFFFFF;"></div>
<div class="a" style="left:468px;top:51px;width:36px;height:1px;background:#D4D0C8;"></div>
<div class="a" style="left:468px;top:51px;width:1px;height:21px;background:#D4D0C8;"></div>
<div class="a" style="left:469px;top:52px;width:34px;height:1px;background:#FFFFFF;"></div>
<div class="a" style="left:469px;top:52px;width:1px;height:19px;background:#FFFFFF;"></div>
<div class="a" style="left:468px;top:71px;width:36px;height:1px;background:#404040;"></div>
<div class="a" style="left:503px;top:51px;width:1px;height:21px;background:#404040;"></div>
<div class="a" style="left:469px;top:70px;width:34px;height:1px;background:#808080;"></div>
<div class="a" style="left:502px;top:52px;width:1px;height:19px;background:#808080;"></div>
<div class="a" style="left:493px;top:53px;width:9px;height:17px;background:#D4D0C8;"></div>
<svg class="a" style="left:495px;top:60px" width="5" height="3" viewBox="0 0 5 3" shape-rendering="crispEdges"><path d="M0 0 H5 L2.5 3 Z" fill="#000"/><rect x="0" y="0" width="5" height="1" fill="#000"/><rect x="1" y="1" width="3" height="1" fill="#000"/><rect x="2" y="2" width="1" height="1" fill="#000"/></svg>
<svg class="a" style="left:477px;top:57px" width="9" height="9" viewBox="0 0 9 9" shape-rendering="crispEdges"><rect width="9" height="9" fill="#B8B8B8"/><path d="M1 9 V6 L4 1.5 H9" stroke="#000" stroke-width="1.2" fill="none" shape-rendering="auto"/><circle cx="5" cy="5.5" r="1.6" fill="#000"/><rect x="5" y="5" width="1" height="4" fill="#000"/></svg>
<div class="a t" style="left:513px;top:40px;font-size:9.4px;color:#000;font-weight:normal;">Miter limit:</div>
<div class="a" style="left:513px;top:51px;width:57px;height:22px;background:#FFFFFF;"></div>
<div class="a" style="left:513px;top:51px;width:57px;height:1px;background:#808080;"></div>
<div class="a" style="left:513px;top:51px;width:1px;height:22px;background:#808080;"></div>
<div class="a" style="left:514px;top:52px;width:55px;height:1px;background:#404040;"></div>
<div class="a" style="left:514px;top:52px;width:1px;height:20px;background:#404040;"></div>
<div class="a" style="left:513px;top:72px;width:57px;height:1px;background:#FFFFFF;"></div>
<div class="a" style="left:569px;top:51px;width:1px;height:22px;background:#FFFFFF;"></div>
<div class="a" style="left:514px;top:71px;width:55px;height:1px;background:#D4D0C8;"></div>
<div class="a" style="left:568px;top:52px;width:1px;height:20px;background:#D4D0C8;"></div>
<div class="a" style="left:515px;top:69px;width:54px;height:2px;background:#D4D0C8;"></div>
<div class="a t" style="left:517px;top:54px;font-size:10px;color:#000;font-weight:normal;">1</div>
<div class="a" style="left:547px;top:53px;width:11px;height:8px;background:#D4D0C8;"></div>
<div class="a" style="left:547px;top:53px;width:11px;height:1px;background:#FFFFFF;"></div>
<div class="a" style="left:547px;top:53px;width:1px;height:8px;background:#FFFFFF;"></div>
<div class="a" style="left:547px;top:60px;width:11px;height:1px;background:#404040;"></div>
<div class="a" style="left:557px;top:53px;width:1px;height:8px;background:#404040;"></div>
<div class="a" style="left:548px;top:59px;width:9px;height:1px;background:#808080;"></div>
<div class="a" style="left:556px;top:54px;width:1px;height:6px;background:#808080;"></div>
<div class="a" style="left:547px;top:61px;width:11px;height:8px;background:#D4D0C8;"></div>
<div class="a" style="left:547px;top:61px;width:11px;height:1px;background:#FFFFFF;"></div>
<div class="a" style="left:547px;top:61px;width:1px;height:8px;background:#FFFFFF;"></div>
<div class="a" style="left:547px;top:68px;width:11px;height:1px;background:#404040;"></div>
<div class="a" style="left:557px;top:61px;width:1px;height:8px;background:#404040;"></div>
<div class="a" style="left:548px;top:67px;width:9px;height:1px;background:#808080;"></div>
<div class="a" style="left:556px;top:62px;width:1px;height:6px;background:#808080;"></div>
<svg class="a" style="left:551px;top:56px" width="3" height="2" viewBox="0 0 3 2" shape-rendering="crispEdges"><rect x="1" y="0" width="1" height="1" fill="#000"/><rect x="0" y="1" width="3" height="1" fill="#000"/></svg>
<svg class="a" style="left:551px;top:64px" width="3" height="2" viewBox="0 0 3 2" shape-rendering="crispEdges"><rect x="0" y="0" width="3" height="1" fill="#000"/><rect x="1" y="1" width="1" height="1" fill="#000"/></svg>
<div class="a" style="left:558px;top:53px;width:11px;height:16px;background:#D4D0C8;"></div>
<div class="a" style="left:558px;top:53px;width:11px;height:1px;background:#FFFFFF;"></div>
<div class="a" style="left:558px;top:53px;width:1px;height:16px;background:#FFFFFF;"></div>
<div class="a" style="left:558px;top:68px;width:11px;height:1px;background:#404040;"></div>
<div class="a" style="left:568px;top:53px;width:1px;height:16px;background:#404040;"></div>
<div class="a" style="left:559px;top:67px;width:9px;height:1px;background:#808080;"></div>
<div class="a" style="left:567px;top:54px;width:1px;height:14px;background:#808080;"></div>
<svg class="a" style="left:561px;top:59px" width="6" height="5" viewBox="0 0 6 5" shape-rendering="crispEdges"><path d="M0 0 H6 L3 3 Z" fill="#000"/><rect x="0" y="0" width="6" height="1" fill="#000"/><rect x="1" y="1" width="4" height="1" fill="#000"/><rect x="2" y="2" width="2" height="1" fill="#000"/><rect x="0" y="4" width="6" height="1" fill="#000"/></svg>
<div class="a" style="left:652px;top:52px;width:110px;height:16px;background:rgba(0,0,0,0.35);"></div>
<div class="a" style="left:650px;top:50px;width:110px;height:16px;background:#FFFFE1;border:1px solid #000"></div>
<div class="a t" style="left:653px;top:53px;font-size:10.6px;color:#000;font-weight:normal;">Preset Shape Tool (P)</div>
<div class="a" style="left:742px;top:81px;width:25px;height:353px;background:#D4D0C8;"></div>
<div class="a" style="left:740px;top:83px;width:27px;height:1px;background:#FFFFFF;"></div>
<div class="a t" style="left:746px;top:88px;font-size:11px;color:#000;font-weight:normal;">Materials</div>
<div class="a" style="left:746px;top:106px;width:21px;height:15px;background:#DEDBD5;border-top:1px solid #fff;border-left:1px solid #fff"></div>
<div class="a" style="left:758px;top:108px;width:9px;height:11px;background:linear-gradient(to right,#000,rgba(0,0,0,0)),linear-gradient(to bottom,#f00,#ff0 20%,#0f0 40%,#0ff 55%,#00f 75%,#f0f 90%,#f00)"></div>
<div class="a" style="left:743px;top:121px;width:4px;height:1px;background:#FFFFFF;"></div>
<div class="a" style="left:743px;top:121px;width:1px;height:122px;background:#FFFFFF;"></div>
<div class="a" style="left:746px;top:123px;width:21px;height:118px;background:linear-gradient(to right,#000 0%,rgba(0,0,0,0) 160%),linear-gradient(to bottom,#E02000 0%,#E0C000 18%,#20C000 35%,#00C0A0 50%,#0040E0 68%,#A000C0 82%,#E00040 100%)"></div>
<div class="a" style="left:746px;top:232px;width:21px;height:9px;background:#000;"></div>
<div class="a" style="left:757px;top:232px;width:10px;height:9px;background:#404040;"></div>
<div class="a" style="left:744px;top:241px;width:23px;height:1px;background:#FFFFFF;"></div>
<div class="a" style="left:744px;top:242px;width:23px;height:1px;background:#FFFFFF;"></div>
<div class="a" style="left:743px;top:244px;width:24px;height:1px;background:#808080;"></div>
</body></html>
